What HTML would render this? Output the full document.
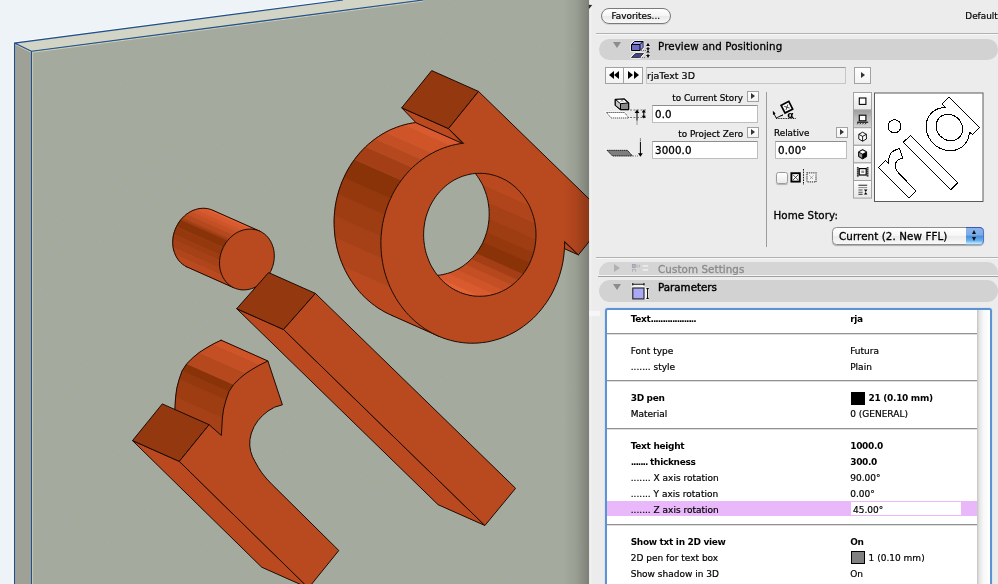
<!DOCTYPE html>
<html><head><meta charset="utf-8"><title>rjaText 3D</title>
<style>
html,body{margin:0;padding:0;background:#ececec;}
body{width:998px;height:584px;overflow:hidden;position:relative;font-family:"DejaVu Sans","Liberation Sans",sans-serif;color:#000;}
#scene{position:absolute;left:0;top:0;width:592px;height:584px;display:block;}
#icons{position:absolute;left:0;top:0;width:998px;height:584px;pointer-events:none;will-change:transform;}
#panel{position:absolute;left:0;top:0;width:998px;height:584px;overflow:hidden;will-change:transform;-webkit-text-stroke:0.2px currentColor;}
#panel > *{position:absolute;}
.pbg{left:589px;top:0;width:409px;height:584px;background:#ececec;}
.pedge{left:588.7px;top:0;width:3.4px;height:584px;background:linear-gradient(90deg,#e4e4e4,#f0f0f0 50%,#eeeeee);}
.t11{font-size:10.3px;line-height:14px;white-space:pre;position:absolute;letter-spacing:0.1px;-webkit-text-stroke:0.3px currentColor;}
.t10{font-size:9.5px;line-height:12px;white-space:pre;position:absolute;}
.t9{font-size:8.8px;line-height:12px;white-space:pre;position:absolute;}
.grey{color:#8a8a8a;}
.btn-fav{left:601px;top:8px;width:67.6px;height:13.6px;border:1.2px solid #7a7a7a;border-radius:8px;background:linear-gradient(#ffffff,#f4f4f4 50%,#e9e9e9 52%,#f8f8f8);font-size:8.9px;line-height:14px;text-align:center;box-shadow:0 1px 0 rgba(0,0,0,.10);}
.hsep{left:596px;width:402px;height:1px;background:#b2b2b2;box-shadow:0 1px 0 #f8f8f8;}
.hsep2{left:598px;width:400px;height:1px;background:#f4f4f4;box-shadow:0 1px 0 #a0a0a0;}
.vsep{width:1px;background:#9c9c9c;}
.pill{left:599px;width:399px;background:#d2d2d2;border-radius:11px;}
.pill.dim{background:#d5d5d5;}
.tri-down{width:0;height:0;border-left:4px solid transparent;border-right:4px solid transparent;border-top:6.5px solid #8c8c8c;}
.tri-right{width:0;height:0;border-top:4.1px solid transparent;border-bottom:4.1px solid transparent;border-left:6.8px solid #b0b0b0;}
.navbtn,.sbtn{box-sizing:border-box;border:1px solid #a2a2a2;background:linear-gradient(#ffffff,#f3f3f3);}
.arr{position:absolute;width:0;height:0;top:3.3px;border-top:4.2px solid transparent;border-bottom:4.2px solid transparent;}
.arr.l{border-right:5.6px solid #000;}
.arr.r{border-left:5.6px solid #000;}
.arr.s{border-top-width:3.1px;border-bottom-width:3.1px;border-left-width:4.4px;border-left-color:#333;}
.field{box-sizing:border-box;border:1px solid #bdbdbd;border-top-color:#8e8e8e;background:#fff;}
.field.ro{background:#ececec;border-color:#c6c6c6;border-top-color:#9c9c9c;}
.chk{width:10px;height:10px;border:1px solid #9a9a9a;border-radius:2.5px;background:linear-gradient(#fefefe,#ebebeb);box-shadow:0 1px 1px rgba(0,0,0,.25);}
.popup{box-sizing:border-box;border:1px solid #8c8c8c;border-radius:4.5px;background:linear-gradient(#ffffff,#f6f6f6 48%,#ebebeb 52%,#f8f8f8);box-shadow:0 1px 1px rgba(0,0,0,.28);}
.pcap{position:absolute;right:-1px;top:-1px;width:18px;height:18px;box-sizing:border-box;border-top:1.3px solid #4254b6;border-right:1px solid #4f74cc;border-bottom:1px solid #8aa6c8;border-radius:0 4.5px 4.5px 0;background:linear-gradient(#8ab6ec,#7aaae8 44%,#4c8edc 52%,#68aeec 78%,#c4f0ff 100%);}
.pcap i{position:absolute;left:5.6px;width:0;height:0;border-left:2.7px solid transparent;border-right:2.7px solid transparent;}
.pcap i.u{top:2.1px;border-bottom:4px solid #111;}
.pcap i.d{top:9.2px;border-top:4px solid #111;}
.notch{left:589px;top:311px;width:10.5px;height:5px;background:#f6f6f6;}
.list{left:605px;top:307.7px;width:387.3px;height:290px;box-sizing:border-box;border:2.3px solid #5b93d4;border-radius:3px;background:#fff;overflow:hidden;box-shadow:0 0 1.2px #8fb6e4;}
.list > *{position:absolute;}
.row{left:0;width:370px;height:14px;font-size:9px;line-height:14px;white-space:pre;}
.row.b{font-weight:bold;letter-spacing:-0.32px;-webkit-text-stroke:0;}
.row span{position:absolute;top:0;}
.row i.d{font-style:normal;}
.row.b i.d{letter-spacing:-1.05px;}
.row .k{left:23.7px;}
.row .v{left:243.2px;}
.row .v2{left:261.6px;}
.row .sw{left:244.3px;top:0.7px;width:13.4px;height:12.8px;box-sizing:border-box;border:1px solid #000;}
.lsep{left:0;width:370px;height:1px;background:#939393;box-shadow:0 1px 0 #dedede;}
.hl{left:0;width:370px;height:15.5px;background:#e8b8fa;}
.edit{left:243.6px;width:110.2px;height:13.2px;background:#fff;}
.sbar{left:370px;top:0;width:13px;height:290px;background:linear-gradient(90deg,#c4c4c4,#e6e6e6 20%,#f8f8f8 50%,#ffffff);}

</style></head>
<body>
<svg id="scene" width="592" height="584" viewBox="0 0 592 584">
<rect x="0" y="0" width="592" height="584" fill="#eef3f8"/>
<path d="M14.3 43.1 L343 0 L423 0 L31.3 51.3Z" fill="#d2d5c5"/>
<path d="M14.3 43.1 L31.3 51.3 L31.3 584 L14.3 584Z" fill="#9fa197"/>
<path d="M31.3 51.3 L423 0 L592 0 L592 584 L31.3 584Z" fill="#a5aa9e"/>
<path d="M13.4 42.2 L343 -1" fill="none" stroke="#ffffff" stroke-width="1" opacity="0.9"/>
<path d="M15.6 44.6 L31.5 52.4 L423 1.1 M32.6 52.4 V584" fill="none" stroke="#dcdcc4" stroke-width="0.9" opacity="0.8"/>
<path d="M13.2 43 V584" fill="none" stroke="#ffffff" stroke-width="0.8" opacity="0.9"/>
<path d="M14.5 584 L14.5 43.1 L343 0 M14.5 43.1 L31.5 51.3 L423 0 M31.5 51.3 L31.5 584" fill="none" stroke="#1f4f8c" stroke-width="1.1"/>
<path id="speckle" d="M46.6 59.5h1.3M97.1 46.0h1.3M77.6 62.1h1.3M58.0 78.2h1.3M38.4 94.4h1.3M128.1 48.5h1.3M108.6 64.6h1.3M89.0 80.8h1.3M69.4 96.9h1.3M49.9 113.0h1.3M178.7 34.9h1.3M159.1 51.1h1.3M139.6 67.2h1.3M120.0 83.3h1.3M100.4 99.5h1.3M80.9 115.6h1.3M61.3 131.7h1.3M41.8 147.9h1.3M209.7 37.5h1.3M190.1 53.6h1.3M170.6 69.7h1.3M151.0 85.9h1.3M131.4 102.0h1.3M111.9 118.1h1.3M92.3 134.3h1.3M72.8 150.4h1.3M53.2 166.6h1.3M33.6 182.7h1.3M260.2 23.9h1.3M240.7 40.0h1.3M221.1 56.2h1.3M201.6 72.3h1.3M182.0 88.4h1.3M162.4 104.6h1.3M142.9 120.7h1.3M123.3 136.8h1.3M103.8 153.0h1.3M84.2 169.1h1.3M64.6 185.2h1.3M45.1 201.4h1.3M291.2 26.4h1.3M271.7 42.6h1.3M252.1 58.7h1.3M232.6 74.8h1.3M213.0 91.0h1.3M193.4 107.1h1.3M173.9 123.2h1.3M154.3 139.4h1.3M134.8 155.5h1.3M115.2 171.7h1.3M95.6 187.8h1.3M76.1 203.9h1.3M56.5 220.1h1.3M37.0 236.2h1.3M341.8 12.9h1.3M322.2 29.0h1.3M302.7 45.1h1.3M283.1 61.3h1.3M263.6 77.4h1.3M244.0 93.5h1.3M224.4 109.7h1.3M204.9 125.8h1.3M185.3 141.9h1.3M165.8 158.1h1.3M146.2 174.2h1.3M126.6 190.3h1.3M107.1 206.5h1.3M87.5 222.6h1.3M68.0 238.7h1.3M48.4 254.9h1.3M372.8 15.4h1.3M353.2 31.5h1.3M333.7 47.7h1.3M314.1 63.8h1.3M294.6 79.9h1.3M275.0 96.1h1.3M255.4 112.2h1.3M235.9 128.3h1.3M216.3 144.5h1.3M196.8 160.6h1.3M177.2 176.8h1.3M157.6 192.9h1.3M138.1 209.0h1.3M118.5 225.2h1.3M99.0 241.3h1.3M79.4 257.4h1.3M59.8 273.6h1.3M40.3 289.7h1.3M423.4 1.8h1.3M403.8 17.9h1.3M384.2 34.1h1.3M364.7 50.2h1.3M345.1 66.4h1.3M325.6 82.5h1.3M306.0 98.6h1.3M286.4 114.8h1.3M266.9 130.9h1.3M247.3 147.0h1.3M227.8 163.2h1.3M208.2 179.3h1.3M188.6 195.4h1.3M169.1 211.6h1.3M149.5 227.7h1.3M130.0 243.8h1.3M110.4 260.0h1.3M90.8 276.1h1.3M71.3 292.2h1.3M51.7 308.4h1.3M454.4 4.4h1.3M434.8 20.5h1.3M415.2 36.6h1.3M395.7 52.8h1.3M376.1 68.9h1.3M356.6 85.0h1.3M337.0 101.2h1.3M317.4 117.3h1.3M297.9 133.4h1.3M278.3 149.6h1.3M258.8 165.7h1.3M239.2 181.9h1.3M219.6 198.0h1.3M200.1 214.1h1.3M180.5 230.3h1.3M161.0 246.4h1.3M141.4 262.5h1.3M121.8 278.7h1.3M102.3 294.8h1.3M82.7 310.9h1.3M63.2 327.1h1.3M43.6 343.2h1.3M485.4 6.9h1.3M465.8 23.1h1.3M446.2 39.2h1.3M426.7 55.3h1.3M407.1 71.5h1.3M387.6 87.6h1.3M368.0 103.7h1.3M348.4 119.9h1.3M328.9 136.0h1.3M309.3 152.1h1.3M289.8 168.3h1.3M270.2 184.4h1.3M250.6 200.5h1.3M231.1 216.7h1.3M211.5 232.8h1.3M192.0 248.9h1.3M172.4 265.1h1.3M152.8 281.2h1.3M133.3 297.3h1.3M113.7 313.5h1.3M94.2 329.6h1.3M74.6 345.8h1.3M55.0 361.9h1.3M35.5 378.0h1.3M516.4 9.5h1.3M496.8 25.6h1.3M477.2 41.7h1.3M457.7 57.9h1.3M438.1 74.0h1.3M418.6 90.1h1.3M399.0 106.3h1.3M379.4 122.4h1.3M359.9 138.5h1.3M340.3 154.7h1.3M320.8 170.8h1.3M301.2 187.0h1.3M281.6 203.1h1.3M262.1 219.2h1.3M242.5 235.4h1.3M223.0 251.5h1.3M203.4 267.6h1.3M183.8 283.8h1.3M164.3 299.9h1.3M144.7 316.0h1.3M125.2 332.2h1.3M105.6 348.3h1.3M86.0 364.4h1.3M66.5 380.6h1.3M46.9 396.7h1.3M547.4 12.0h1.3M527.8 28.1h1.3M508.2 44.3h1.3M488.7 60.4h1.3M469.1 76.6h1.3M449.6 92.7h1.3M430.0 108.8h1.3M410.4 125.0h1.3M390.9 141.1h1.3M371.3 157.2h1.3M351.8 173.4h1.3M332.2 189.5h1.3M312.6 205.6h1.3M293.1 221.8h1.3M273.5 237.9h1.3M254.0 254.0h1.3M234.4 270.2h1.3M214.8 286.3h1.3M195.3 302.4h1.3M175.7 318.6h1.3M156.2 334.7h1.3M136.6 350.9h1.3M117.0 367.0h1.3M97.5 383.1h1.3M77.9 399.3h1.3M58.4 415.4h1.3M38.8 431.5h1.3M578.4 14.6h1.3M558.8 30.7h1.3M539.2 46.8h1.3M519.7 63.0h1.3M500.1 79.1h1.3M480.6 95.2h1.3M461.0 111.4h1.3M441.4 127.5h1.3M421.9 143.6h1.3M402.3 159.8h1.3M382.8 175.9h1.3M363.2 192.1h1.3M343.6 208.2h1.3M324.1 224.3h1.3M304.5 240.5h1.3M285.0 256.6h1.3M265.4 272.7h1.3M245.8 288.9h1.3M226.3 305.0h1.3M206.7 321.1h1.3M187.2 337.3h1.3M167.6 353.4h1.3M148.0 369.5h1.3M128.5 385.7h1.3M108.9 401.8h1.3M89.4 417.9h1.3M69.8 434.1h1.3M50.2 450.2h1.3M570.2 49.4h1.3M550.7 65.5h1.3M531.1 81.7h1.3M511.6 97.8h1.3M492.0 113.9h1.3M472.4 130.1h1.3M452.9 146.2h1.3M433.3 162.3h1.3M413.8 178.5h1.3M394.2 194.6h1.3M374.6 210.7h1.3M355.1 226.9h1.3M335.5 243.0h1.3M316.0 259.1h1.3M296.4 275.3h1.3M276.8 291.4h1.3M257.3 307.5h1.3M237.7 323.7h1.3M218.2 339.8h1.3M198.6 356.0h1.3M179.0 372.1h1.3M159.5 388.2h1.3M139.9 404.4h1.3M120.4 420.5h1.3M100.8 436.6h1.3M81.2 452.8h1.3M61.7 468.9h1.3M42.1 485.0h1.3M581.7 68.1h1.3M562.1 84.2h1.3M542.6 100.3h1.3M523.0 116.5h1.3M503.4 132.6h1.3M483.9 148.7h1.3M464.3 164.9h1.3M444.8 181.0h1.3M425.2 197.2h1.3M405.6 213.3h1.3M386.1 229.4h1.3M366.5 245.6h1.3M347.0 261.7h1.3M327.4 277.8h1.3M307.8 294.0h1.3M288.3 310.1h1.3M268.7 326.2h1.3M249.2 342.4h1.3M229.6 358.5h1.3M210.0 374.6h1.3M190.5 390.8h1.3M170.9 406.9h1.3M151.4 423.0h1.3M131.8 439.2h1.3M112.2 455.3h1.3M92.7 471.4h1.3M73.1 487.6h1.3M53.6 503.7h1.3M34.0 519.9h1.3M573.6 102.9h1.3M554.0 119.0h1.3M534.4 135.2h1.3M514.9 151.3h1.3M495.3 167.4h1.3M475.8 183.6h1.3M456.2 199.7h1.3M436.6 215.8h1.3M417.1 232.0h1.3M397.5 248.1h1.3M378.0 264.2h1.3M358.4 280.4h1.3M338.8 296.5h1.3M319.3 312.6h1.3M299.7 328.8h1.3M280.2 344.9h1.3M260.6 361.1h1.3M241.0 377.2h1.3M221.5 393.3h1.3M201.9 409.5h1.3M182.4 425.6h1.3M162.8 441.7h1.3M143.2 457.9h1.3M123.7 474.0h1.3M104.1 490.1h1.3M84.6 506.3h1.3M65.0 522.4h1.3M45.4 538.5h1.3M585.0 121.6h1.3M565.4 137.7h1.3M545.9 153.8h1.3M526.3 170.0h1.3M506.8 186.1h1.3M487.2 202.3h1.3M467.6 218.4h1.3M448.1 234.5h1.3M428.5 250.7h1.3M409.0 266.8h1.3M389.4 282.9h1.3M369.8 299.1h1.3M350.3 315.2h1.3M330.7 331.3h1.3M311.2 347.5h1.3M291.6 363.6h1.3M272.0 379.7h1.3M252.5 395.9h1.3M232.9 412.0h1.3M213.4 428.1h1.3M193.8 444.3h1.3M174.2 460.4h1.3M154.7 476.5h1.3M135.1 492.7h1.3M115.6 508.8h1.3M96.0 525.0h1.3M76.4 541.1h1.3M56.9 557.2h1.3M37.3 573.4h1.3M576.9 156.4h1.3M557.3 172.5h1.3M537.8 188.7h1.3M518.2 204.8h1.3M498.6 220.9h1.3M479.1 237.1h1.3M459.5 253.2h1.3M440.0 269.3h1.3M420.4 285.5h1.3M400.8 301.6h1.3M381.3 317.7h1.3M361.7 333.9h1.3M342.2 350.0h1.3M322.6 366.2h1.3M303.0 382.3h1.3M283.5 398.4h1.3M263.9 414.6h1.3M244.4 430.7h1.3M224.8 446.8h1.3M205.2 463.0h1.3M185.7 479.1h1.3M166.1 495.2h1.3M146.6 511.4h1.3M127.0 527.5h1.3M107.4 543.6h1.3M87.9 559.8h1.3M68.3 575.9h1.3M568.8 191.2h1.3M549.2 207.4h1.3M529.6 223.5h1.3M510.1 239.6h1.3M490.5 255.8h1.3M471.0 271.9h1.3M451.4 288.0h1.3M431.8 304.2h1.3M412.3 320.3h1.3M392.7 336.4h1.3M373.2 352.6h1.3M353.6 368.7h1.3M334.0 384.8h1.3M314.5 401.0h1.3M294.9 417.1h1.3M275.4 433.2h1.3M255.8 449.4h1.3M236.2 465.5h1.3M216.7 481.6h1.3M197.1 497.8h1.3M177.6 513.9h1.3M158.0 530.1h1.3M138.4 546.2h1.3M118.9 562.3h1.3M99.3 578.5h1.3M580.2 209.9h1.3M560.6 226.0h1.3M541.1 242.2h1.3M521.5 258.3h1.3M502.0 274.4h1.3M482.4 290.6h1.3M462.8 306.7h1.3M443.3 322.8h1.3M423.7 339.0h1.3M404.2 355.1h1.3M384.6 371.3h1.3M365.0 387.4h1.3M345.5 403.5h1.3M325.9 419.7h1.3M306.4 435.8h1.3M286.8 451.9h1.3M267.2 468.1h1.3M247.7 484.2h1.3M228.1 500.3h1.3M208.6 516.5h1.3M189.0 532.6h1.3M169.4 548.7h1.3M149.9 564.9h1.3M130.3 581.0h1.3M572.1 244.7h1.3M552.5 260.9h1.3M533.0 277.0h1.3M513.4 293.1h1.3M493.8 309.3h1.3M474.3 325.4h1.3M454.7 341.5h1.3M435.2 357.7h1.3M415.6 373.8h1.3M396.0 389.9h1.3M376.5 406.1h1.3M356.9 422.2h1.3M337.4 438.3h1.3M317.8 454.5h1.3M298.2 470.6h1.3M278.7 486.7h1.3M259.1 502.9h1.3M239.6 519.0h1.3M220.0 535.2h1.3M200.4 551.3h1.3M180.9 567.4h1.3M161.3 583.6h1.3M583.5 263.4h1.3M564.0 279.5h1.3M544.4 295.7h1.3M524.8 311.8h1.3M505.3 327.9h1.3M485.7 344.1h1.3M466.2 360.2h1.3M446.6 376.4h1.3M427.0 392.5h1.3M407.5 408.6h1.3M387.9 424.8h1.3M368.4 440.9h1.3M348.8 457.0h1.3M329.2 473.2h1.3M309.7 489.3h1.3M290.1 505.4h1.3M270.6 521.6h1.3M251.0 537.7h1.3M231.4 553.8h1.3M211.9 570.0h1.3M575.4 298.2h1.3M555.8 314.4h1.3M536.3 330.5h1.3M516.7 346.6h1.3M497.2 362.8h1.3M477.6 378.9h1.3M458.0 395.0h1.3M438.5 411.2h1.3M418.9 427.3h1.3M399.4 443.4h1.3M379.8 459.6h1.3M360.2 475.7h1.3M340.7 491.8h1.3M321.1 508.0h1.3M301.6 524.1h1.3M282.0 540.3h1.3M262.4 556.4h1.3M242.9 572.5h1.3M586.8 316.9h1.3M567.3 333.0h1.3M547.7 349.2h1.3M528.2 365.3h1.3M508.6 381.5h1.3M489.0 397.6h1.3M469.5 413.7h1.3M449.9 429.9h1.3M430.4 446.0h1.3M410.8 462.1h1.3M391.2 478.3h1.3M371.7 494.4h1.3M352.1 510.5h1.3M332.6 526.7h1.3M313.0 542.8h1.3M293.4 558.9h1.3M273.9 575.1h1.3M578.7 351.7h1.3M559.2 367.9h1.3M539.6 384.0h1.3M520.0 400.1h1.3M500.5 416.3h1.3M480.9 432.4h1.3M461.4 448.5h1.3M441.8 464.7h1.3M422.2 480.8h1.3M402.7 496.9h1.3M383.1 513.1h1.3M363.6 529.2h1.3M344.0 545.4h1.3M324.4 561.5h1.3M304.9 577.6h1.3M570.6 386.6h1.3M551.0 402.7h1.3M531.5 418.8h1.3M511.9 435.0h1.3M492.4 451.1h1.3M472.8 467.2h1.3M453.2 483.4h1.3M433.7 499.5h1.3M414.1 515.6h1.3M394.6 531.8h1.3M375.0 547.9h1.3M355.4 564.0h1.3M335.9 580.2h1.3M582.0 405.2h1.3M562.5 421.4h1.3M542.9 437.5h1.3M523.4 453.6h1.3M503.8 469.8h1.3M484.2 485.9h1.3M464.7 502.0h1.3M445.1 518.2h1.3M425.6 534.3h1.3M406.0 550.5h1.3M386.4 566.6h1.3M366.9 582.7h1.3M573.9 440.1h1.3M554.4 456.2h1.3M534.8 472.3h1.3M515.2 488.5h1.3M495.7 504.6h1.3M476.1 520.7h1.3M456.6 536.9h1.3M437.0 553.0h1.3M417.4 569.1h1.3M585.4 458.7h1.3M565.8 474.9h1.3M546.2 491.0h1.3M526.7 507.1h1.3M507.1 523.3h1.3M487.6 539.4h1.3M468.0 555.6h1.3M448.4 571.7h1.3M577.2 493.6h1.3M557.7 509.7h1.3M538.1 525.8h1.3M518.6 542.0h1.3M499.0 558.1h1.3M479.4 574.2h1.3M569.1 528.4h1.3M549.6 544.5h1.3M530.0 560.7h1.3M510.4 576.8h1.3M580.6 547.1h1.3M561.0 563.2h1.3M541.4 579.3h1.3M572.4 581.9h1.3" stroke="#a6a8dc" stroke-width="1.2" fill="none" opacity="0.85"/>
<path d="M260.6 231.5 L258.5 230.6 L256.3 229.9 L254.0 229.4 L251.7 229.1 L249.3 229.1 L202.5 208.3 L204.9 208.3 L207.2 208.6 L209.5 209.1 L211.7 209.8 L213.8 210.7Z" fill="#e36334" stroke="#e36334" stroke-width="0.6"/>
<path d="M249.3 229.1 L246.9 229.3 L244.5 229.7 L242.1 230.4 L195.3 209.6 L197.7 208.9 L200.1 208.5 L202.5 208.3Z" fill="#d85a2e" stroke="#d85a2e" stroke-width="0.6"/>
<path d="M242.1 230.4 L239.8 231.2 L237.5 232.3 L190.7 211.5 L193.0 210.4 L195.3 209.6Z" fill="#cf5529" stroke="#cf5529" stroke-width="0.6"/>
<path d="M237.5 232.3 L235.3 233.6 L233.2 235.1 L186.4 214.3 L188.5 212.8 L190.7 211.5Z" fill="#c44f24" stroke="#c44f24" stroke-width="0.6"/>
<path d="M233.2 235.1 L231.2 236.8 L229.3 238.7 L182.5 217.9 L184.4 216.0 L186.4 214.3Z" fill="#b6481e" stroke="#b6481e" stroke-width="0.6"/>
<path d="M229.3 238.7 L227.5 240.7 L180.7 219.9 L182.5 217.9Z" fill="#a43e16" stroke="#a43e16" stroke-width="0.6"/>
<path d="M227.5 240.7 L225.9 242.8 L224.5 245.1 L223.2 247.5 L176.4 226.7 L177.7 224.3 L179.1 222.0 L180.7 219.9Z" fill="#8b3308" stroke="#8b3308" stroke-width="0.6"/>
<path d="M223.2 247.5 L222.1 250.0 L221.2 252.5 L220.4 255.1 L173.6 234.3 L174.4 231.7 L175.3 229.2 L176.4 226.7Z" fill="#96380e" stroke="#96380e" stroke-width="0.6"/>
<path d="M220.4 255.1 L219.9 257.8 L219.6 260.4 L172.8 239.6 L173.1 237.0 L173.6 234.3Z" fill="#9e3c12" stroke="#9e3c12" stroke-width="0.6"/>
<path d="M219.6 260.4 L219.5 263.1 L219.6 265.7 L219.9 268.3 L173.1 247.5 L172.8 244.9 L172.7 242.3 L172.8 239.6Z" fill="#a64016" stroke="#a64016" stroke-width="0.6"/>
<path d="M219.9 268.3 L220.4 270.8 L221.2 273.2 L222.1 275.5 L175.3 254.7 L174.4 252.4 L173.6 250.0 L173.1 247.5Z" fill="#b0441a" stroke="#b0441a" stroke-width="0.6"/>
<path d="M222.1 275.5 L223.2 277.7 L224.5 279.8 L225.9 281.7 L227.5 283.4 L229.3 285.0 L231.2 286.3 L233.2 287.5 L186.4 266.7 L184.4 265.5 L182.5 264.2 L180.7 262.6 L179.1 260.9 L177.7 259.0 L176.4 256.9 L175.3 254.7Z" fill="#ba491f" stroke="#ba491f" stroke-width="0.6"/>
<path d="M213.8 210.7 L211.7 209.8 L209.5 209.1 L207.2 208.6 L204.9 208.3 L202.5 208.3 L200.1 208.5 L197.7 208.9 L195.3 209.6 L193.0 210.4 L190.7 211.5 L188.5 212.8 L186.4 214.3 L184.4 216.0 L182.5 217.9 L180.7 219.9 L179.1 222.0 L177.7 224.3 L176.4 226.7 L175.3 229.2 L174.4 231.7 L173.6 234.3 L173.1 237.0 L172.8 239.6 L172.7 242.3 L172.8 244.9 L173.1 247.5 L173.6 250.0 L174.4 252.4 L175.3 254.7 L176.4 256.9 L177.7 259.0 L179.1 260.9 L180.7 262.6 L182.5 264.2 L184.4 265.5 L186.4 266.7" fill="none" stroke="#1c0a02" stroke-width="1" stroke-linejoin="round" stroke-linecap="round"/>
<path d="M213.8 210.7 L260.6 231.5" fill="none" stroke="#1c0a02" stroke-width="1" stroke-linejoin="round" stroke-linecap="round"/>
<path d="M186.4 266.7 L233.2 287.5" fill="none" stroke="#1c0a02" stroke-width="1" stroke-linejoin="round" stroke-linecap="round"/>
<path d="M274.3 255.9 L274.2 253.3 L273.9 250.7 L273.4 248.2 L272.6 245.8 L271.7 243.5 L270.6 241.3 L269.3 239.2 L267.9 237.3 L266.3 235.6 L264.5 234.0 L262.6 232.7 L260.6 231.5 L258.5 230.6 L256.3 229.9 L254.0 229.4 L251.7 229.1 L249.3 229.1 L246.9 229.3 L244.5 229.7 L242.1 230.4 L239.8 231.2 L237.5 232.3 L235.3 233.6 L233.2 235.1 L231.2 236.8 L229.3 238.7 L227.5 240.7 L225.9 242.8 L224.5 245.1 L223.2 247.5 L222.1 250.0 L221.2 252.5 L220.4 255.1 L219.9 257.8 L219.6 260.4 L219.5 263.1 L219.6 265.7 L219.9 268.3 L220.4 270.8 L221.2 273.2 L222.1 275.5 L223.2 277.7 L224.5 279.8 L225.9 281.7 L227.5 283.4 L229.3 285.0 L231.2 286.3 L233.2 287.5 L235.3 288.4 L237.5 289.1 L239.8 289.6 L242.1 289.9 L244.5 289.9 L246.9 289.7 L249.3 289.3 L251.7 288.6 L254.0 287.8 L256.3 286.7 L258.5 285.4 L260.6 283.9 L262.6 282.2 L264.5 280.3 L266.3 278.3 L267.9 276.2 L269.3 273.9 L270.6 271.5 L271.7 269.0 L272.6 266.5 L273.4 263.9 L273.9 261.2 L274.2 258.6 L274.3 255.9Z" fill="#b9491f" stroke="#1c0a02" stroke-width="1" stroke-linejoin="round" />
<path d="M236.7 308.7 L283.5 329.5 L484.9 525.5 L438.1 504.7Z" fill="#ba491f" stroke="#1c0a02" stroke-width="1" stroke-linejoin="round" />
<path d="M236.7 308.7 L268.6 272.6 L315.4 293.4 L283.5 329.5Z" fill="#93380f" stroke="#1c0a02" stroke-width="1" stroke-linejoin="round" />
<path d="M475.2 142.7 L479.2 142.9 L483.2 143.3 L487.1 143.8 L491.1 144.6 L495.0 145.5 L498.9 146.7 L502.7 148.0 L506.4 149.5 L459.6 128.7 L455.9 127.2 L452.1 125.9 L448.2 124.7 L444.3 123.8 L440.3 123.0 L436.4 122.5 L432.4 122.1 L428.4 121.9Z" fill="#e36334" stroke="#e36334" stroke-width="0.6"/>
<path d="M439.1 336.4 L435.4 334.7 L431.8 332.9 L428.2 330.8 L424.7 328.7 L421.4 326.3 L418.1 323.8 L414.9 321.1 L411.9 318.3 L408.9 315.4 L406.1 312.3 L403.4 309.0 L400.9 305.7 L398.4 302.2 L396.1 298.6 L394.0 294.9 L392.0 291.1 L390.2 287.3 L343.4 266.5 L345.2 270.3 L347.2 274.1 L349.3 277.8 L351.6 281.4 L354.1 284.9 L356.6 288.2 L359.3 291.5 L362.1 294.6 L365.1 297.5 L368.1 300.3 L371.3 303.0 L374.6 305.5 L377.9 307.9 L381.4 310.0 L385.0 312.1 L388.6 313.9 L392.3 315.6Z" fill="#ba491f" stroke="#ba491f" stroke-width="0.6"/>
<path d="M390.2 287.3 L388.5 283.3 L387.0 279.3 L385.6 275.1 L384.4 271.0 L383.4 266.7 L382.6 262.5 L381.9 258.2 L335.1 237.4 L335.8 241.7 L336.6 245.9 L337.6 250.2 L338.8 254.3 L340.2 258.5 L341.7 262.5 L343.4 266.5Z" fill="#b0441a" stroke="#b0441a" stroke-width="0.6"/>
<path d="M381.9 258.2 L381.4 253.8 L381.1 249.5 L380.9 245.1 L380.9 240.7 L381.1 236.4 L334.3 215.6 L334.1 219.9 L334.1 224.3 L334.3 228.7 L334.6 233.0 L335.1 237.4Z" fill="#a64016" stroke="#a64016" stroke-width="0.6"/>
<path d="M381.1 236.4 L381.5 232.0 L382.0 227.7 L382.7 223.3 L383.6 219.1 L384.7 214.9 L337.9 194.1 L336.8 198.3 L335.9 202.5 L335.2 206.9 L334.7 211.2 L334.3 215.6Z" fill="#9e3c12" stroke="#9e3c12" stroke-width="0.6"/>
<path d="M384.7 214.9 L385.9 210.7 L387.3 206.6 L388.8 202.5 L390.6 198.6 L343.8 177.8 L342.0 181.7 L340.5 185.8 L339.1 189.9 L337.9 194.1Z" fill="#96380e" stroke="#96380e" stroke-width="0.6"/>
<path d="M390.6 198.6 L392.4 194.7 L394.4 190.9 L396.6 187.2 L398.9 183.6 L401.4 180.2 L354.6 159.4 L352.1 162.8 L349.8 166.4 L347.6 170.1 L345.6 173.9 L343.8 177.8Z" fill="#8b3308" stroke="#8b3308" stroke-width="0.6"/>
<path d="M401.4 180.2 L404.0 176.8 L406.7 173.6 L409.5 170.5 L412.5 167.5 L365.7 146.7 L362.7 149.7 L359.9 152.8 L357.2 156.0 L354.6 159.4Z" fill="#a43e16" stroke="#a43e16" stroke-width="0.6"/>
<path d="M412.5 167.5 L415.6 164.7 L418.8 162.1 L422.1 159.5 L375.3 138.7 L372.0 141.3 L368.8 143.9 L365.7 146.7Z" fill="#b6481e" stroke="#b6481e" stroke-width="0.6"/>
<path d="M422.1 159.5 L425.5 157.2 L428.9 155.0 L432.5 153.0 L385.7 132.2 L382.1 134.2 L378.7 136.4 L375.3 138.7Z" fill="#c44f24" stroke="#c44f24" stroke-width="0.6"/>
<path d="M432.5 153.0 L436.1 151.1 L439.8 149.5 L443.6 148.0 L447.4 146.7 L451.3 145.5 L404.5 124.7 L400.6 125.9 L396.8 127.2 L393.0 128.7 L389.3 130.3 L385.7 132.2Z" fill="#cf5529" stroke="#cf5529" stroke-width="0.6"/>
<path d="M451.3 145.5 L455.2 144.6 L459.2 143.8 L463.2 143.3 L467.2 142.9 L471.2 142.7 L424.4 121.9 L420.4 122.1 L416.4 122.5 L412.4 123.0 L408.4 123.8 L404.5 124.7Z" fill="#d85a2e" stroke="#d85a2e" stroke-width="0.6"/>
<path d="M471.2 142.7 L475.2 142.7 L428.4 121.9 L424.4 121.9Z" fill="#e36334" stroke="#e36334" stroke-width="0.6"/>
<path d="M392.3 315.6 L388.6 313.9 L385.0 312.1 L381.4 310.0 L377.9 307.9 L374.6 305.5 L371.3 303.0 L368.1 300.3 L365.1 297.5 L362.1 294.6 L359.3 291.5 L356.6 288.2 L354.1 284.9 L351.6 281.4 L349.3 277.8 L347.2 274.1 L345.2 270.3 L343.4 266.5 L341.7 262.5 L340.2 258.5 L338.8 254.3 L337.6 250.2 L336.6 245.9 L335.8 241.7 L335.1 237.4 L334.6 233.0 L334.3 228.7 L334.1 224.3 L334.1 219.9 L334.3 215.6 L334.7 211.2 L335.2 206.9 L335.9 202.5 L336.8 198.3 L337.9 194.1 L339.1 189.9 L340.5 185.8 L342.0 181.7 L343.8 177.8 L345.6 173.9 L347.6 170.1 L349.8 166.4 L352.1 162.8 L354.6 159.4 L357.2 156.0 L359.9 152.8 L362.7 149.7 L365.7 146.7 L368.8 143.9 L372.0 141.3 L375.3 138.7 L378.7 136.4 L382.1 134.2 L385.7 132.2 L389.3 130.3 L393.0 128.7 L396.8 127.2 L400.6 125.9 L404.5 124.7 L408.4 123.8 L412.4 123.0 L416.4 122.5 L420.4 122.1 L424.4 121.9 L428.4 121.9 L432.4 122.1 L436.4 122.5 L440.3 123.0 L444.3 123.8 L448.2 124.7 L452.1 125.9 L455.9 127.2 L459.6 128.7" fill="none" stroke="#1c0a02" stroke-width="1" stroke-linejoin="round" stroke-linecap="round"/>
<path d="M459.6 128.7 L506.4 149.5" fill="none" stroke="#1c0a02" stroke-width="1" stroke-linejoin="round" stroke-linecap="round"/>
<path d="M392.3 315.6 L439.1 336.4" fill="none" stroke="#1c0a02" stroke-width="1" stroke-linejoin="round" stroke-linecap="round"/>
<path d="M401.7 107.8 L448.5 128.6 L463.0 143.7 L416.2 122.9Z" fill="#ba491f" stroke="#1c0a02" stroke-width="1" stroke-linejoin="round" />
<path d="M517.8 221.3 L564.6 242.1 L578.4 254.9 L531.6 234.1Z" fill="#ba491f" stroke="#1c0a02" stroke-width="1" stroke-linejoin="round" />
<path d="M401.7 107.8 L431.7 70.6 L478.5 91.4 L448.5 128.6Z" fill="#93380f" stroke="#1c0a02" stroke-width="1" stroke-linejoin="round" />
<defs><clipPath id="holeF"><path d="M479.8 173.3 L482.3 173.4 L484.7 173.5 L487.1 173.8 L489.6 174.2 L492.0 174.8 L494.3 175.4 L496.7 176.1 L499.0 177.0 L501.3 178.0 L503.6 179.1 L505.8 180.2 L507.9 181.5 L510.0 182.9 L512.0 184.4 L514.0 186.0 L515.9 187.7 L517.8 189.5 L519.5 191.3 L521.2 193.3 L522.9 195.3 L524.4 197.4 L525.8 199.5 L527.2 201.8 L528.5 204.1 L529.7 206.4 L530.7 208.8 L531.7 211.3 L532.6 213.8 L533.4 216.3 L534.1 218.9 L534.7 221.5 L535.1 224.1 L535.5 226.8 L535.8 229.4 L535.9 232.1 L536.0 234.8 L535.9 237.5 L535.8 240.2 L535.5 242.8 L535.1 245.5 L534.7 248.1 L534.1 250.7 L533.4 253.3 L532.6 255.8 L531.7 258.3 L530.7 260.8 L529.7 263.2 L528.5 265.6 L527.2 267.8 L525.8 270.1 L524.4 272.2 L522.9 274.3 L521.2 276.3 L519.5 278.3 L517.8 280.1 L515.9 281.9 L514.0 283.6 L512.0 285.2 L510.0 286.7 L507.9 288.1 L505.8 289.4 L503.6 290.5 L501.3 291.6 L499.0 292.6 L496.7 293.5 L494.3 294.2 L492.0 294.8 L489.6 295.4 L487.1 295.8 L484.7 296.1 L482.3 296.2 L479.8 296.3 L477.3 296.2 L474.9 296.1 L472.5 295.8 L470.0 295.4 L467.6 294.8 L465.3 294.2 L462.9 293.5 L460.6 292.6 L458.3 291.6 L456.0 290.5 L453.8 289.4 L451.7 288.1 L449.6 286.7 L447.6 285.2 L445.6 283.6 L443.7 281.9 L441.8 280.1 L440.1 278.3 L438.4 276.3 L436.7 274.3 L435.2 272.2 L433.8 270.1 L432.4 267.8 L431.1 265.6 L429.9 263.2 L428.9 260.8 L427.9 258.3 L427.0 255.8 L426.2 253.3 L425.5 250.7 L424.9 248.1 L424.5 245.5 L424.1 242.8 L423.8 240.2 L423.7 237.5 L423.6 234.8 L423.7 232.1 L423.8 229.4 L424.1 226.8 L424.5 224.1 L424.9 221.5 L425.5 218.9 L426.2 216.3 L427.0 213.8 L427.9 211.3 L428.9 208.8 L429.9 206.4 L431.1 204.1 L432.4 201.8 L433.8 199.5 L435.2 197.4 L436.7 195.3 L438.4 193.3 L440.1 191.3 L441.8 189.5 L443.7 187.7 L445.6 186.0 L447.6 184.4 L449.6 182.9 L451.7 181.5 L453.8 180.2 L456.0 179.1 L458.3 178.0 L460.6 177.0 L462.9 176.1 L465.3 175.4 L467.6 174.8 L470.0 174.2 L472.5 173.8 L474.9 173.5 L477.3 173.4 L479.8 173.3Z"/></clipPath><clipPath id="outerF"><path d="M475.2 142.7 L479.2 142.9 L483.2 143.3 L487.1 143.8 L491.1 144.6 L495.0 145.5 L498.9 146.7 L502.7 148.0 L506.4 149.5 L510.1 151.2 L513.7 153.0 L517.3 155.0 L520.8 157.2 L524.1 159.6 L527.4 162.1 L530.6 164.8 L533.6 167.6 L536.6 170.5 L539.4 173.6 L542.1 176.8 L544.6 180.2 L547.1 183.7 L549.4 187.3 L551.5 190.9 L553.5 194.7 L555.3 198.6 L557.0 202.6 L558.5 206.6 L559.9 210.7 L561.1 214.9 L562.1 219.1 L562.9 223.4 L563.6 227.7 L564.1 232.1 L564.4 236.4 L564.6 240.8 L564.6 245.2 L564.4 249.5 L564.0 253.9 L563.5 258.2 L562.8 262.5 L561.9 266.8 L560.8 271.0 L559.6 275.2 L558.2 279.3 L556.7 283.4 L554.9 287.3 L553.1 291.2 L551.1 295.0 L548.9 298.7 L546.6 302.3 L544.1 305.7 L541.5 309.1 L538.8 312.3 L536.0 315.4 L533.0 318.4 L529.9 321.2 L526.7 323.8 L523.4 326.3 L520.0 328.7 L516.6 330.9 L513.0 332.9 L509.4 334.7 L505.7 336.4 L501.9 337.9 L498.1 339.2 L494.2 340.3 L490.3 341.3 L486.3 342.1 L482.3 342.6 L478.3 343.0 L474.3 343.2 L470.3 343.2 L466.3 343.0 L462.3 342.6 L458.4 342.0 L454.4 341.3 L450.5 340.3 L446.6 339.2 L442.8 337.9 L439.1 336.4 L435.4 334.7 L431.8 332.9 L428.2 330.8 L424.7 328.7 L421.4 326.3 L418.1 323.8 L414.9 321.1 L411.9 318.3 L408.9 315.4 L406.1 312.3 L403.4 309.0 L400.9 305.7 L398.4 302.2 L396.1 298.6 L394.0 294.9 L392.0 291.1 L390.2 287.3 L388.5 283.3 L387.0 279.3 L385.6 275.1 L384.4 271.0 L383.4 266.7 L382.6 262.5 L381.9 258.2 L381.4 253.8 L381.1 249.5 L380.9 245.1 L380.9 240.7 L381.1 236.4 L381.5 232.0 L382.0 227.7 L382.7 223.3 L383.6 219.1 L384.7 214.9 L385.9 210.7 L387.3 206.6 L388.8 202.5 L390.6 198.6 L392.4 194.7 L394.4 190.9 L396.6 187.2 L398.9 183.6 L401.4 180.2 L404.0 176.8 L406.7 173.6 L409.5 170.5 L412.5 167.5 L415.6 164.7 L418.8 162.1 L422.1 159.5 L425.5 157.2 L428.9 155.0 L432.5 153.0 L436.1 151.1 L439.8 149.5 L443.6 148.0 L447.4 146.7 L451.3 145.5 L455.2 144.6 L459.2 143.8 L463.2 143.3 L467.2 142.9 L471.2 142.7 L475.2 142.7Z"/></clipPath><clipPath id="notstem" clip-rule="evenodd"><path d="M0 0H600V600H0Z M448.5 128.6 L478.5 91.4 L608.4 217.7 L578.4 254.9Z" clip-rule="evenodd"/></clipPath></defs>
<g clip-path="url(#holeF)">
<path d="M479.8 173.3 L482.3 173.4 L484.7 173.5 L487.1 173.8 L489.6 174.2 L492.0 174.8 L494.3 175.4 L496.7 176.1 L499.0 177.0 L501.3 178.0 L503.6 179.1 L505.8 180.2 L507.9 181.5 L510.0 182.9 L512.0 184.4 L514.0 186.0 L515.9 187.7 L517.8 189.5 L519.5 191.3 L521.2 193.3 L522.9 195.3 L524.4 197.4 L525.8 199.5 L527.2 201.8 L528.5 204.1 L529.7 206.4 L530.7 208.8 L531.7 211.3 L532.6 213.8 L533.4 216.3 L534.1 218.9 L534.7 221.5 L535.1 224.1 L535.5 226.8 L535.8 229.4 L535.9 232.1 L536.0 234.8 L535.9 237.5 L535.8 240.2 L535.5 242.8 L535.1 245.5 L534.7 248.1 L534.1 250.7 L533.4 253.3 L532.6 255.8 L531.7 258.3 L530.7 260.8 L529.7 263.2 L528.5 265.6 L527.2 267.8 L525.8 270.1 L524.4 272.2 L522.9 274.3 L521.2 276.3 L519.5 278.3 L517.8 280.1 L515.9 281.9 L514.0 283.6 L512.0 285.2 L510.0 286.7 L507.9 288.1 L505.8 289.4 L503.6 290.5 L501.3 291.6 L499.0 292.6 L496.7 293.5 L494.3 294.2 L492.0 294.8 L489.6 295.4 L487.1 295.8 L484.7 296.1 L482.3 296.2 L479.8 296.3 L477.3 296.2 L474.9 296.1 L472.5 295.8 L470.0 295.4 L467.6 294.8 L465.3 294.2 L462.9 293.5 L460.6 292.6 L458.3 291.6 L456.0 290.5 L453.8 289.4 L451.7 288.1 L449.6 286.7 L447.6 285.2 L445.6 283.6 L443.7 281.9 L441.8 280.1 L440.1 278.3 L438.4 276.3 L436.7 274.3 L435.2 272.2 L433.8 270.1 L432.4 267.8 L431.1 265.6 L429.9 263.2 L428.9 260.8 L427.9 258.3 L427.0 255.8 L426.2 253.3 L425.5 250.7 L424.9 248.1 L424.5 245.5 L424.1 242.8 L423.8 240.2 L423.7 237.5 L423.6 234.8 L423.7 232.1 L423.8 229.4 L424.1 226.8 L424.5 224.1 L424.9 221.5 L425.5 218.9 L426.2 216.3 L427.0 213.8 L427.9 211.3 L428.9 208.8 L429.9 206.4 L431.1 204.1 L432.4 201.8 L433.8 199.5 L435.2 197.4 L436.7 195.3 L438.4 193.3 L440.1 191.3 L441.8 189.5 L443.7 187.7 L445.6 186.0 L447.6 184.4 L449.6 182.9 L451.7 181.5 L453.8 180.2 L456.0 179.1 L458.3 178.0 L460.6 177.0 L462.9 176.1 L465.3 175.4 L467.6 174.8 L470.0 174.2 L472.5 173.8 L474.9 173.5 L477.3 173.4 L479.8 173.3Z" fill="#b9491f"/>
<path d="M501.3 178.0 L503.6 179.1 L505.8 180.2 L507.9 181.5 L510.0 182.9 L512.0 184.4 L514.0 186.0 L515.9 187.7 L517.8 189.5 L519.5 191.3 L521.2 193.3 L522.9 195.3 L524.4 197.4 L525.8 199.5 L527.2 201.8 L528.5 204.1 L529.7 206.4 L482.9 185.6 L481.7 183.2 L480.4 181.0 L479.0 178.7 L477.6 176.6 L476.1 174.5 L474.4 172.5 L472.7 170.5 L471.0 168.7 L469.1 166.9 L467.2 165.2 L465.2 163.6 L463.2 162.1 L461.1 160.7 L459.0 159.4 L456.8 158.3 L454.5 157.2Z" fill="#ba491f" stroke="#ba491f" stroke-width="0.6"/>
<path d="M529.7 206.4 L530.7 208.8 L531.7 211.3 L532.6 213.8 L533.4 216.3 L534.1 218.9 L534.7 221.5 L535.1 224.1 L488.3 203.3 L487.9 200.7 L487.3 198.1 L486.6 195.5 L485.8 193.0 L484.9 190.5 L483.9 188.0 L482.9 185.6Z" fill="#b0441a" stroke="#b0441a" stroke-width="0.6"/>
<path d="M535.1 224.1 L535.5 226.8 L535.8 229.4 L535.9 232.1 L536.0 234.8 L535.9 237.5 L535.8 240.2 L489.0 219.4 L489.1 216.7 L489.2 214.0 L489.1 211.3 L489.0 208.6 L488.7 206.0 L488.3 203.3Z" fill="#a64016" stroke="#a64016" stroke-width="0.6"/>
<path d="M535.8 240.2 L535.5 242.8 L535.1 245.5 L534.7 248.1 L534.1 250.7 L533.4 253.3 L486.6 232.5 L487.3 229.9 L487.9 227.3 L488.3 224.7 L488.7 222.0 L489.0 219.4Z" fill="#9e3c12" stroke="#9e3c12" stroke-width="0.6"/>
<path d="M533.4 253.3 L532.6 255.8 L531.7 258.3 L530.7 260.8 L529.7 263.2 L482.9 242.4 L483.9 240.0 L484.9 237.5 L485.8 235.0 L486.6 232.5Z" fill="#96380e" stroke="#96380e" stroke-width="0.6"/>
<path d="M529.7 263.2 L528.5 265.6 L527.2 267.8 L525.8 270.1 L524.4 272.2 L522.9 274.3 L476.1 253.5 L477.6 251.4 L479.0 249.3 L480.4 247.0 L481.7 244.8 L482.9 242.4Z" fill="#8b3308" stroke="#8b3308" stroke-width="0.6"/>
<path d="M522.9 274.3 L521.2 276.3 L519.5 278.3 L517.8 280.1 L471.0 259.3 L472.7 257.5 L474.4 255.5 L476.1 253.5Z" fill="#a43e16" stroke="#a43e16" stroke-width="0.6"/>
<path d="M517.8 280.1 L515.9 281.9 L514.0 283.6 L512.0 285.2 L465.2 264.4 L467.2 262.8 L469.1 261.1 L471.0 259.3Z" fill="#b6481e" stroke="#b6481e" stroke-width="0.6"/>
<path d="M512.0 285.2 L510.0 286.7 L507.9 288.1 L505.8 289.4 L503.6 290.5 L456.8 269.7 L459.0 268.6 L461.1 267.3 L463.2 265.9 L465.2 264.4Z" fill="#c44f24" stroke="#c44f24" stroke-width="0.6"/>
<path d="M503.6 290.5 L501.3 291.6 L499.0 292.6 L496.7 293.5 L494.3 294.2 L447.5 273.4 L449.9 272.7 L452.2 271.8 L454.5 270.8 L456.8 269.7Z" fill="#cf5529" stroke="#cf5529" stroke-width="0.6"/>
<path d="M494.3 294.2 L492.0 294.8 L489.6 295.4 L487.1 295.8 L484.7 296.1 L482.3 296.2 L479.8 296.3 L433.0 275.5 L435.5 275.4 L437.9 275.3 L440.3 275.0 L442.8 274.6 L445.2 274.0 L447.5 273.4Z" fill="#d85a2e" stroke="#d85a2e" stroke-width="0.6"/>
<path d="M479.8 296.3 L477.3 296.2 L474.9 296.1 L472.5 295.8 L470.0 295.4 L467.6 294.8 L465.3 294.2 L462.9 293.5 L460.6 292.6 L458.3 291.6 L411.5 270.8 L413.8 271.8 L416.1 272.7 L418.5 273.4 L420.8 274.0 L423.2 274.6 L425.7 275.0 L428.1 275.3 L430.5 275.4 L433.0 275.5Z" fill="#e36334" stroke="#e36334" stroke-width="0.6"/>
<path d="M433.0 152.5 L435.5 152.6 L437.9 152.7 L440.3 153.0 L442.8 153.4 L445.2 154.0 L447.5 154.6 L449.9 155.3 L452.2 156.2 L454.5 157.2 L456.8 158.3 L459.0 159.4 L461.1 160.7 L463.2 162.1 L465.2 163.6 L467.2 165.2 L469.1 166.9 L471.0 168.7 L472.7 170.5 L474.4 172.5 L476.1 174.5 L477.6 176.6 L479.0 178.7 L480.4 181.0 L481.7 183.2 L482.9 185.6 L483.9 188.0 L484.9 190.5 L485.8 193.0 L486.6 195.5 L487.3 198.1 L487.9 200.7 L488.3 203.3 L488.7 206.0 L489.0 208.6 L489.1 211.3 L489.2 214.0 L489.1 216.7 L489.0 219.4 L488.7 222.0 L488.3 224.7 L487.9 227.3 L487.3 229.9 L486.6 232.5 L485.8 235.0 L484.9 237.5 L483.9 240.0 L482.9 242.4 L481.7 244.8 L480.4 247.0 L479.0 249.3 L477.6 251.4 L476.1 253.5 L474.4 255.5 L472.7 257.5 L471.0 259.3 L469.1 261.1 L467.2 262.8 L465.2 264.4 L463.2 265.9 L461.1 267.3 L459.0 268.6 L456.8 269.7 L454.5 270.8 L452.2 271.8 L449.9 272.7 L447.5 273.4 L445.2 274.0 L442.8 274.6 L440.3 275.0 L437.9 275.3 L435.5 275.4 L433.0 275.5 L430.5 275.4 L428.1 275.3 L425.7 275.0 L423.2 274.6 L420.8 274.0 L418.5 273.4 L416.1 272.7 L413.8 271.8 L411.5 270.8 L409.2 269.7 L407.0 268.6 L404.9 267.3 L402.8 265.9 L400.8 264.4 L398.8 262.8 L396.9 261.1 L395.0 259.3 L393.3 257.5 L391.6 255.5 L389.9 253.5 L388.4 251.4 L387.0 249.3 L385.6 247.0 L384.3 244.8 L383.1 242.4 L382.1 240.0 L381.1 237.5 L380.2 235.0 L379.4 232.5 L378.7 229.9 L378.1 227.3 L377.7 224.7 L377.3 222.0 L377.0 219.4 L376.9 216.7 L376.8 214.0 L376.9 211.3 L377.0 208.6 L377.3 206.0 L377.7 203.3 L378.1 200.7 L378.7 198.1 L379.4 195.5 L380.2 193.0 L381.1 190.5 L382.1 188.0 L383.1 185.6 L384.3 183.2 L385.6 181.0 L387.0 178.7 L388.4 176.6 L389.9 174.5 L391.6 172.5 L393.3 170.5 L395.0 168.7 L396.9 166.9 L398.8 165.2 L400.8 163.6 L402.8 162.1 L404.9 160.7 L407.0 159.4 L409.2 158.3 L411.5 157.2 L413.8 156.2 L416.1 155.3 L418.5 154.6 L420.8 154.0 L423.2 153.4 L425.7 153.0 L428.1 152.7 L430.5 152.6 L433.0 152.5Z" fill="#a5aa9e" stroke="#1c0a02" stroke-width="1"/>
</g>
<path d="M448.5 128.6 L478.5 91.4 L608.4 217.7 L578.4 254.9Z M475.2 142.7 L479.2 142.9 L483.2 143.3 L487.1 143.8 L491.1 144.6 L495.0 145.5 L498.9 146.7 L502.7 148.0 L506.4 149.5 L510.1 151.2 L513.7 153.0 L517.3 155.0 L520.8 157.2 L524.1 159.6 L527.4 162.1 L530.6 164.8 L533.6 167.6 L536.6 170.5 L539.4 173.6 L542.1 176.8 L544.6 180.2 L547.1 183.7 L549.4 187.3 L551.5 190.9 L553.5 194.7 L555.3 198.6 L557.0 202.6 L558.5 206.6 L559.9 210.7 L561.1 214.9 L562.1 219.1 L562.9 223.4 L563.6 227.7 L564.1 232.1 L564.4 236.4 L564.6 240.8 L564.6 245.2 L564.4 249.5 L564.0 253.9 L563.5 258.2 L562.8 262.5 L561.9 266.8 L560.8 271.0 L559.6 275.2 L558.2 279.3 L556.7 283.4 L554.9 287.3 L553.1 291.2 L551.1 295.0 L548.9 298.7 L546.6 302.3 L544.1 305.7 L541.5 309.1 L538.8 312.3 L536.0 315.4 L533.0 318.4 L529.9 321.2 L526.7 323.8 L523.4 326.3 L520.0 328.7 L516.6 330.9 L513.0 332.9 L509.4 334.7 L505.7 336.4 L501.9 337.9 L498.1 339.2 L494.2 340.3 L490.3 341.3 L486.3 342.1 L482.3 342.6 L478.3 343.0 L474.3 343.2 L470.3 343.2 L466.3 343.0 L462.3 342.6 L458.4 342.0 L454.4 341.3 L450.5 340.3 L446.6 339.2 L442.8 337.9 L439.1 336.4 L435.4 334.7 L431.8 332.9 L428.2 330.8 L424.7 328.7 L421.4 326.3 L418.1 323.8 L414.9 321.1 L411.9 318.3 L408.9 315.4 L406.1 312.3 L403.4 309.0 L400.9 305.7 L398.4 302.2 L396.1 298.6 L394.0 294.9 L392.0 291.1 L390.2 287.3 L388.5 283.3 L387.0 279.3 L385.6 275.1 L384.4 271.0 L383.4 266.7 L382.6 262.5 L381.9 258.2 L381.4 253.8 L381.1 249.5 L380.9 245.1 L380.9 240.7 L381.1 236.4 L381.5 232.0 L382.0 227.7 L382.7 223.3 L383.6 219.1 L384.7 214.9 L385.9 210.7 L387.3 206.6 L388.8 202.5 L390.6 198.6 L392.4 194.7 L394.4 190.9 L396.6 187.2 L398.9 183.6 L401.4 180.2 L404.0 176.8 L406.7 173.6 L409.5 170.5 L412.5 167.5 L415.6 164.7 L418.8 162.1 L422.1 159.5 L425.5 157.2 L428.9 155.0 L432.5 153.0 L436.1 151.1 L439.8 149.5 L443.6 148.0 L447.4 146.7 L451.3 145.5 L455.2 144.6 L459.2 143.8 L463.2 143.3 L467.2 142.9 L471.2 142.7 L475.2 142.7Z M479.8 173.3 L477.3 173.4 L474.9 173.5 L472.5 173.8 L470.0 174.2 L467.6 174.8 L465.3 175.4 L462.9 176.1 L460.6 177.0 L458.3 178.0 L456.0 179.1 L453.8 180.2 L451.7 181.5 L449.6 182.9 L447.6 184.4 L445.6 186.0 L443.7 187.7 L441.8 189.5 L440.1 191.3 L438.4 193.3 L436.7 195.3 L435.2 197.4 L433.8 199.5 L432.4 201.8 L431.1 204.1 L429.9 206.4 L428.9 208.8 L427.9 211.3 L427.0 213.8 L426.2 216.3 L425.5 218.9 L424.9 221.5 L424.5 224.1 L424.1 226.8 L423.8 229.4 L423.7 232.1 L423.6 234.8 L423.7 237.5 L423.8 240.2 L424.1 242.8 L424.5 245.5 L424.9 248.1 L425.5 250.7 L426.2 253.3 L427.0 255.8 L427.9 258.3 L428.9 260.8 L429.9 263.2 L431.1 265.6 L432.4 267.8 L433.8 270.1 L435.2 272.2 L436.7 274.3 L438.4 276.3 L440.1 278.3 L441.8 280.1 L443.7 281.9 L445.6 283.6 L447.6 285.2 L449.6 286.7 L451.7 288.1 L453.8 289.4 L456.0 290.5 L458.3 291.6 L460.6 292.6 L462.9 293.5 L465.3 294.2 L467.6 294.8 L470.0 295.4 L472.5 295.8 L474.9 296.1 L477.3 296.2 L479.8 296.3 L482.3 296.2 L484.7 296.1 L487.1 295.8 L489.6 295.4 L492.0 294.8 L494.3 294.2 L496.7 293.5 L499.0 292.6 L501.3 291.6 L503.6 290.5 L505.8 289.4 L507.9 288.1 L510.0 286.7 L512.0 285.2 L514.0 283.6 L515.9 281.9 L517.8 280.1 L519.5 278.3 L521.2 276.3 L522.9 274.3 L524.4 272.2 L525.8 270.1 L527.2 267.8 L528.5 265.6 L529.7 263.2 L530.7 260.8 L531.7 258.3 L532.6 255.8 L533.4 253.3 L534.1 250.7 L534.7 248.1 L535.1 245.5 L535.5 242.8 L535.8 240.2 L535.9 237.5 L536.0 234.8 L535.9 232.1 L535.8 229.4 L535.5 226.8 L535.1 224.1 L534.7 221.5 L534.1 218.9 L533.4 216.3 L532.6 213.8 L531.7 211.3 L530.7 208.8 L529.7 206.4 L528.5 204.1 L527.2 201.8 L525.8 199.5 L524.4 197.4 L522.9 195.3 L521.2 193.3 L519.5 191.3 L517.8 189.5 L515.9 187.7 L514.0 186.0 L512.0 184.4 L510.0 182.9 L507.9 181.5 L505.8 180.2 L503.6 179.1 L501.3 178.0 L499.0 177.0 L496.7 176.1 L494.3 175.4 L492.0 174.8 L489.6 174.2 L487.1 173.8 L484.7 173.5 L482.3 173.4 L479.8 173.3Z" fill="#b9491f" fill-rule="nonzero" stroke="none"/>
<path d="M479.8 173.3 L482.3 173.4 L484.7 173.5 L487.1 173.8 L489.6 174.2 L492.0 174.8 L494.3 175.4 L496.7 176.1 L499.0 177.0 L501.3 178.0 L503.6 179.1 L505.8 180.2 L507.9 181.5 L510.0 182.9 L512.0 184.4 L514.0 186.0 L515.9 187.7 L517.8 189.5 L519.5 191.3 L521.2 193.3 L522.9 195.3 L524.4 197.4 L525.8 199.5 L527.2 201.8 L528.5 204.1 L529.7 206.4 L530.7 208.8 L531.7 211.3 L532.6 213.8 L533.4 216.3 L534.1 218.9 L534.7 221.5 L535.1 224.1 L535.5 226.8 L535.8 229.4 L535.9 232.1 L536.0 234.8 L535.9 237.5 L535.8 240.2 L535.5 242.8 L535.1 245.5 L534.7 248.1 L534.1 250.7 L533.4 253.3 L532.6 255.8 L531.7 258.3 L530.7 260.8 L529.7 263.2 L528.5 265.6 L527.2 267.8 L525.8 270.1 L524.4 272.2 L522.9 274.3 L521.2 276.3 L519.5 278.3 L517.8 280.1 L515.9 281.9 L514.0 283.6 L512.0 285.2 L510.0 286.7 L507.9 288.1 L505.8 289.4 L503.6 290.5 L501.3 291.6 L499.0 292.6 L496.7 293.5 L494.3 294.2 L492.0 294.8 L489.6 295.4 L487.1 295.8 L484.7 296.1 L482.3 296.2 L479.8 296.3 L477.3 296.2 L474.9 296.1 L472.5 295.8 L470.0 295.4 L467.6 294.8 L465.3 294.2 L462.9 293.5 L460.6 292.6 L458.3 291.6 L456.0 290.5 L453.8 289.4 L451.7 288.1 L449.6 286.7 L447.6 285.2 L445.6 283.6 L443.7 281.9 L441.8 280.1 L440.1 278.3 L438.4 276.3 L436.7 274.3 L435.2 272.2 L433.8 270.1 L432.4 267.8 L431.1 265.6 L429.9 263.2 L428.9 260.8 L427.9 258.3 L427.0 255.8 L426.2 253.3 L425.5 250.7 L424.9 248.1 L424.5 245.5 L424.1 242.8 L423.8 240.2 L423.7 237.5 L423.6 234.8 L423.7 232.1 L423.8 229.4 L424.1 226.8 L424.5 224.1 L424.9 221.5 L425.5 218.9 L426.2 216.3 L427.0 213.8 L427.9 211.3 L428.9 208.8 L429.9 206.4 L431.1 204.1 L432.4 201.8 L433.8 199.5 L435.2 197.4 L436.7 195.3 L438.4 193.3 L440.1 191.3 L441.8 189.5 L443.7 187.7 L445.6 186.0 L447.6 184.4 L449.6 182.9 L451.7 181.5 L453.8 180.2 L456.0 179.1 L458.3 178.0 L460.6 177.0 L462.9 176.1 L465.3 175.4 L467.6 174.8 L470.0 174.2 L472.5 173.8 L474.9 173.5 L477.3 173.4 L479.8 173.3Z" fill="none" stroke="#1c0a02" stroke-width="1"/>
<defs><clipPath id="cs"><path clip-rule="evenodd" d="M0 0H600V600H0Z M448.5 128.6 L478.5 91.4 L608.4 217.7 L578.4 254.9Z"/></clipPath><clipPath id="co"><path clip-rule="evenodd" d="M0 0H600V600H0Z M475.2 142.7 L479.2 142.9 L483.2 143.3 L487.1 143.8 L491.1 144.6 L495.0 145.5 L498.9 146.7 L502.7 148.0 L506.4 149.5 L510.1 151.2 L513.7 153.0 L517.3 155.0 L520.8 157.2 L524.1 159.6 L527.4 162.1 L530.6 164.8 L533.6 167.6 L536.6 170.5 L539.4 173.6 L542.1 176.8 L544.6 180.2 L547.1 183.7 L549.4 187.3 L551.5 190.9 L553.5 194.7 L555.3 198.6 L557.0 202.6 L558.5 206.6 L559.9 210.7 L561.1 214.9 L562.1 219.1 L562.9 223.4 L563.6 227.7 L564.1 232.1 L564.4 236.4 L564.6 240.8 L564.6 245.2 L564.4 249.5 L564.0 253.9 L563.5 258.2 L562.8 262.5 L561.9 266.8 L560.8 271.0 L559.6 275.2 L558.2 279.3 L556.7 283.4 L554.9 287.3 L553.1 291.2 L551.1 295.0 L548.9 298.7 L546.6 302.3 L544.1 305.7 L541.5 309.1 L538.8 312.3 L536.0 315.4 L533.0 318.4 L529.9 321.2 L526.7 323.8 L523.4 326.3 L520.0 328.7 L516.6 330.9 L513.0 332.9 L509.4 334.7 L505.7 336.4 L501.9 337.9 L498.1 339.2 L494.2 340.3 L490.3 341.3 L486.3 342.1 L482.3 342.6 L478.3 343.0 L474.3 343.2 L470.3 343.2 L466.3 343.0 L462.3 342.6 L458.4 342.0 L454.4 341.3 L450.5 340.3 L446.6 339.2 L442.8 337.9 L439.1 336.4 L435.4 334.7 L431.8 332.9 L428.2 330.8 L424.7 328.7 L421.4 326.3 L418.1 323.8 L414.9 321.1 L411.9 318.3 L408.9 315.4 L406.1 312.3 L403.4 309.0 L400.9 305.7 L398.4 302.2 L396.1 298.6 L394.0 294.9 L392.0 291.1 L390.2 287.3 L388.5 283.3 L387.0 279.3 L385.6 275.1 L384.4 271.0 L383.4 266.7 L382.6 262.5 L381.9 258.2 L381.4 253.8 L381.1 249.5 L380.9 245.1 L380.9 240.7 L381.1 236.4 L381.5 232.0 L382.0 227.7 L382.7 223.3 L383.6 219.1 L384.7 214.9 L385.9 210.7 L387.3 206.6 L388.8 202.5 L390.6 198.6 L392.4 194.7 L394.4 190.9 L396.6 187.2 L398.9 183.6 L401.4 180.2 L404.0 176.8 L406.7 173.6 L409.5 170.5 L412.5 167.5 L415.6 164.7 L418.8 162.1 L422.1 159.5 L425.5 157.2 L428.9 155.0 L432.5 153.0 L436.1 151.1 L439.8 149.5 L443.6 148.0 L447.4 146.7 L451.3 145.5 L455.2 144.6 L459.2 143.8 L463.2 143.3 L467.2 142.9 L471.2 142.7 L475.2 142.7Z"/></clipPath></defs>
<path d="M475.2 142.7 L479.2 142.9 L483.2 143.3 L487.1 143.8 L491.1 144.6 L495.0 145.5 L498.9 146.7 L502.7 148.0 L506.4 149.5 L510.1 151.2 L513.7 153.0 L517.3 155.0 L520.8 157.2 L524.1 159.6 L527.4 162.1 L530.6 164.8 L533.6 167.6 L536.6 170.5 L539.4 173.6 L542.1 176.8 L544.6 180.2 L547.1 183.7 L549.4 187.3 L551.5 190.9 L553.5 194.7 L555.3 198.6 L557.0 202.6 L558.5 206.6 L559.9 210.7 L561.1 214.9 L562.1 219.1 L562.9 223.4 L563.6 227.7 L564.1 232.1 L564.4 236.4 L564.6 240.8 L564.6 245.2 L564.4 249.5 L564.0 253.9 L563.5 258.2 L562.8 262.5 L561.9 266.8 L560.8 271.0 L559.6 275.2 L558.2 279.3 L556.7 283.4 L554.9 287.3 L553.1 291.2 L551.1 295.0 L548.9 298.7 L546.6 302.3 L544.1 305.7 L541.5 309.1 L538.8 312.3 L536.0 315.4 L533.0 318.4 L529.9 321.2 L526.7 323.8 L523.4 326.3 L520.0 328.7 L516.6 330.9 L513.0 332.9 L509.4 334.7 L505.7 336.4 L501.9 337.9 L498.1 339.2 L494.2 340.3 L490.3 341.3 L486.3 342.1 L482.3 342.6 L478.3 343.0 L474.3 343.2 L470.3 343.2 L466.3 343.0 L462.3 342.6 L458.4 342.0 L454.4 341.3 L450.5 340.3 L446.6 339.2 L442.8 337.9 L439.1 336.4 L435.4 334.7 L431.8 332.9 L428.2 330.8 L424.7 328.7 L421.4 326.3 L418.1 323.8 L414.9 321.1 L411.9 318.3 L408.9 315.4 L406.1 312.3 L403.4 309.0 L400.9 305.7 L398.4 302.2 L396.1 298.6 L394.0 294.9 L392.0 291.1 L390.2 287.3 L388.5 283.3 L387.0 279.3 L385.6 275.1 L384.4 271.0 L383.4 266.7 L382.6 262.5 L381.9 258.2 L381.4 253.8 L381.1 249.5 L380.9 245.1 L380.9 240.7 L381.1 236.4 L381.5 232.0 L382.0 227.7 L382.7 223.3 L383.6 219.1 L384.7 214.9 L385.9 210.7 L387.3 206.6 L388.8 202.5 L390.6 198.6 L392.4 194.7 L394.4 190.9 L396.6 187.2 L398.9 183.6 L401.4 180.2 L404.0 176.8 L406.7 173.6 L409.5 170.5 L412.5 167.5 L415.6 164.7 L418.8 162.1 L422.1 159.5 L425.5 157.2 L428.9 155.0 L432.5 153.0 L436.1 151.1 L439.8 149.5 L443.6 148.0 L447.4 146.7 L451.3 145.5 L455.2 144.6 L459.2 143.8 L463.2 143.3 L467.2 142.9 L471.2 142.7 L475.2 142.7Z" fill="none" stroke="#1c0a02" stroke-width="1" clip-path="url(#cs)"/>
<path d="M448.5 128.6 L478.5 91.4 L608.4 217.7 L578.4 254.9Z" fill="none" stroke="#1c0a02" stroke-width="1" clip-path="url(#co)"/>
<path d="M221.4 435.5 L221.9 426.0 L222.4 418.0 L175.6 397.2 L175.1 405.2 L174.6 414.7Z" fill="#a64016" stroke="#a64016" stroke-width="0.6"/>
<path d="M222.4 418.0 L223.6 409.0 L226.0 400.0 L179.2 379.2 L176.8 388.2 L175.6 397.2Z" fill="#9e3c12" stroke="#9e3c12" stroke-width="0.6"/>
<path d="M226.0 400.0 L228.9 391.7 L182.1 370.9 L179.2 379.2Z" fill="#96380e" stroke="#96380e" stroke-width="0.6"/>
<path d="M228.9 391.7 L233.6 384.5 L186.8 363.7 L182.1 370.9Z" fill="#8b3308" stroke="#8b3308" stroke-width="0.6"/>
<path d="M233.6 384.5 L239.7 378.5 L246.0 373.3 L199.2 352.5 L192.9 357.7 L186.8 363.7Z" fill="#b6481e" stroke="#b6481e" stroke-width="0.6"/>
<path d="M246.0 373.3 L252.9 368.9 L260.0 364.8 L213.2 344.0 L206.1 348.1 L199.2 352.5Z" fill="#c44f24" stroke="#c44f24" stroke-width="0.6"/>
<path d="M260.0 364.8 L267.9 361.0 L221.1 340.2 L213.2 344.0Z" fill="#cf5529" stroke="#cf5529" stroke-width="0.6"/>
<path d="M174.6 414.7 L175.1 405.2 L175.6 397.2 L176.8 388.2 L179.2 379.2 L182.1 370.9 L186.8 363.7 L192.9 357.7 L199.2 352.5 L206.1 348.1 L213.2 344.0 L221.1 340.2" fill="none" stroke="#1c0a02" stroke-width="1" stroke-linejoin="round" stroke-linecap="round"/>
<path d="M221.1 340.2 L267.9 361.0" fill="none" stroke="#1c0a02" stroke-width="1" stroke-linejoin="round" stroke-linecap="round"/>
<path d="M132.5 440.6 L179.3 461.4 L308.5 588.0 L261.7 567.2Z" fill="#ba491f" stroke="#1c0a02" stroke-width="1" stroke-linejoin="round" />
<path d="M132.5 440.6 L162.3 403.9 L209.1 424.7 L179.3 461.4Z" fill="#93380f" stroke="#1c0a02" stroke-width="1" stroke-linejoin="round" />
<path d="M179.3 461.4 L209.1 424.7 L221.4 435.5 L221.9 426.0 L222.4 418.0 L223.6 409.0 L226.0 400.0 L228.9 391.7 L233.6 384.5 L239.7 378.5 L246.0 373.3 L252.9 368.9 L260.0 364.8 L267.9 361.0 L282.4 404.8 L274.5 407.2 L268.0 411.0 L262.5 415.6 L257.8 420.8 L254.1 426.5 L251.4 433.0 L249.9 439.7 L249.8 446.0 L250.7 451.5 L252.5 456.8 L255.0 461.5 L258.2 467.3 L261.9 472.9 L266.8 479.0 L272.2 484.6 L338.8 550.5 L308.5 588.0Z" fill="#b9491f" stroke="#1c0a02" stroke-width="1" stroke-linejoin="round" />
<path d="M283.5 329.5 L315.4 293.4 L515.6 488.3 L484.9 525.5Z" fill="#b9491f" stroke="#1c0a02" stroke-width="1" stroke-linejoin="round" />
<defs><linearGradient id="psh" x1="0" x2="1" y1="0" y2="0"><stop offset="0" stop-color="#000" stop-opacity="0"/><stop offset="0.5" stop-color="#000" stop-opacity="0.07"/><stop offset="1" stop-color="#000" stop-opacity="0.25"/></linearGradient></defs>
<rect x="563" y="0" width="26" height="584" fill="url(#psh)"/>
</svg>
<div id="panel">
<div class="pbg"></div><div class="pedge"></div>
<div class="btn-fav"><span>Favorites...</span></div>
<div class="t9" style="left:965.3px;top:9.6px;font-size:8.9px">Default</div>
<div class="hsep" style="top:33px;"></div>
<div class="pill" style="top:38.5px;height:21px;"></div>
<div class="tri-down" style="left:613px;top:42px;"></div>
<div class="t11" style="left:658px;top:38.6px;">Preview and Positioning</div>
<div class="navbtn" style="left:605px;top:67px;width:19px;height:17px;"><span class="arr l" style="left:2.6px"></span><span class="arr l" style="left:8.4px"></span></div>
<div class="navbtn" style="left:623px;top:67px;width:20px;height:17px;"><span class="arr r" style="left:3.8px"></span><span class="arr r" style="left:9.6px"></span></div>
<div class="field ro" style="left:646px;top:67px;width:200px;height:17px;"><span class="t10" style="left:0px;top:2px;">rjaText 3D</span></div>
<div class="sbtn" style="left:854px;top:67px;width:17px;height:17px;"><span class="arr r s" style="left:5.6px;top:4.4px"></span></div>
<div class="t9" style="left:672.3px;top:91.6px;">to Current Story</div>
<div class="sbtn" style="left:747px;top:90.5px;width:12px;height:11.5px;"><span class="arr r s" style="left:3.4px;top:1.8px"></span></div>
<div class="field" style="left:651.5px;top:105px;width:106px;height:17.5px;"><span class="t11" style="left:2.5px;top:1px;">0.0</span></div>
<div class="t9" style="left:678.3px;top:127.5px;">to Project Zero</div>
<div class="sbtn" style="left:747px;top:126.5px;width:12px;height:11.5px;"><span class="arr r s" style="left:3.4px;top:1.8px"></span></div>
<div class="field" style="left:651.5px;top:140.5px;width:106px;height:18px;"><span class="t11" style="left:2.5px;top:1.5px;">3000.0</span></div>
<div class="vsep" style="left:766px;top:92px;height:155px;"></div>
<div class="t9" style="left:774px;top:127px;">Relative</div>
<div class="sbtn" style="left:836px;top:126.5px;width:12px;height:11.5px;"><span class="arr r s" style="left:3.4px;top:1.8px"></span></div>
<div class="field" style="left:774.5px;top:140.5px;width:72.5px;height:18px;"><span class="t11" style="left:2.5px;top:1.5px;">0.00°</span></div>
<div class="chk" style="left:775.5px;top:171.5px;"></div>
<div class="t11" style="left:773.4px;top:208px;">Home Story:</div>
<div class="popup" style="left:832px;top:226.5px;width:152px;height:18px;"><span class="t11" style="left:6px;top:1.5px;">Current (2. New FFL)</span><div class="pcap"><i class="u"></i><i class="d"></i></div></div>
<div class="hsep" style="top:257px;"></div>
<div class="pill dim" style="top:262px;height:13px;border-radius:11px 11px 0 0 / 11px 11px 0 0;"></div>
<div class="tri-right" style="left:614px;top:264px;"></div>
<div class="t11 grey" style="left:658px;top:262px;">Custom Settings</div>
<div class="hsep2" style="top:274.5px;"></div>
<div class="pill" style="top:280px;height:21.5px;"></div>
<div class="tri-down" style="left:613px;top:283.5px;"></div>
<div class="t11" style="left:658px;top:279.8px;font-size:10.3px;letter-spacing:0;-webkit-text-stroke:0.45px #000;">Parameters</div>
<div class="notch"></div>
<div class="list">
<div class="row b" style="top:2.0px"><span class="k">Text<i class="d">...................</i></span><span class="v">rja</span></div>
<div class="lsep" style="top:23.0px"></div>
<div class="row" style="top:34.0px"><span class="k">Font type</span><span class="v">Futura</span></div>
<div class="row" style="top:50.0px"><span class="k">....... style</span><span class="v">Plain</span></div>
<div class="lsep" style="top:70.5px"></div>
<div class="row b" style="top:81.6px"><span class="k">3D pen</span><span class="sw" style="background:#000"></span><span class="v2">21 (0.10 mm)</span></div>
<div class="row" style="top:97.6px"><span class="k">Material</span><span class="v">0 (GENERAL)</span></div>
<div class="lsep" style="top:118.3px"></div>
<div class="row b" style="top:129.0px"><span class="k">Text height</span><span class="v">1000.0</span></div>
<div class="row b" style="top:145.0px"><span class="k"><i class="d">.......</i> thickness</span><span class="v">300.0</span></div>
<div class="row" style="top:161.0px"><span class="k">....... X axis rotation</span><span class="v">90.00°</span></div>
<div class="row" style="top:177.0px"><span class="k">....... Y axis rotation</span><span class="v">0.00°</span></div>
<div class="hl" style="top:191.0px"></div><div class="edit" style="top:192.5px"></div>
<div class="row" style="top:193.0px"><span class="k">....... Z axis rotation</span><span class="v" style="left:246.0px">45.00°</span></div>
<div class="lsep" style="top:214.0px"></div>
<div class="row b" style="top:225.0px"><span class="k">Show txt in 2D view</span><span class="v">On</span></div>
<div class="row" style="top:241.0px"><span class="k">2D pen for text box</span><span class="sw" style="background:#808080"></span><span class="v2" style="font-weight:normal">1 (0.10 mm)</span></div>
<div class="row" style="top:257.0px"><span class="k">Show shadow in 3D</span><span class="v">On</span></div>
<div class="sbar"></div>
</div>
</div>
<svg id="icons" width="998" height="584" viewBox="0 0 998 584">
<g>
<path d="M631.5 44.5 L634.5 41.5 H643 V47.5 L640 50.5 H631.5Z M631.5 57.5 L635.5 53.5 H643.5 L639.5 57.5Z" fill="#f2f2f2" stroke="#f2f2f2" stroke-width="2.6" stroke-linejoin="round" opacity="0.9"/>
<path d="M648 43.5 V57.5" stroke="#f4f4f4" stroke-width="3.2" opacity="0.7"/>
<path d="M631.5 44.5 L634.5 41.5 H643 V47.5 L640 50.5 H631.5Z" fill="#6c6cc4" stroke="#000" stroke-width="1"/>
<path d="M632 44.5 L634.8 42 H642.5 L640 44.5Z" fill="#a4a4f4"/>
<path d="M640 44.5 L642.5 42 V47.3 L640 50Z" fill="#9090e8"/>
<path d="M631.5 44.5 H640 V50.5 M640 44.5 L643 41.5" fill="none" stroke="#000" stroke-width="1"/>
<path d="M631.5 57.5 L635.5 53.5 H643.5 L639.5 57.5Z" fill="#44448c" stroke="#222" stroke-width="0.8"/>
<path d="M648 43.5 V57.5" stroke="#000" stroke-width="1" stroke-dasharray="2 1.4"/>
<path d="M646 46 L648 43.3 L650 46Z M646 48.3 L648 50.6 L650 48.3Z M646 52.6 L648 50.4 L650 52.6Z M646 55 L648 57.7 L650 55Z" fill="#000"/>
<path d="M641 50.5 H646 M640 57.5 H646" stroke="#444" stroke-width="0.7" stroke-dasharray="1 1"/>
</g>
<g>
<path d="M615.3 99.3 L624 98.8 L628.6 102.9 V109.6 H620.5 L615.3 105.3Z" fill="#f6f6f6" stroke="#f6f6f6" stroke-width="3" stroke-linejoin="round" opacity="0.85"/>
<path d="M606.5 112.5 H624.5 L629 118 H611Z" fill="#fff" stroke="#fafafa" stroke-width="2.4" opacity="0.9"/>
<path d="M606.5 112.5 H624.5 L629 118 H611Z" fill="#fff" stroke="#222" stroke-width="0.8" stroke-dasharray="1.3 0.7"/>
<path d="M615.3 99.3 L624 98.8 L628.6 102.9 V109.6 H620.5 L615.3 105.3Z" fill="#fff" stroke="#000" stroke-width="1.3" stroke-linejoin="round"/>
<path d="M620.5 103.7 L628.6 102.9 V109.6 H620.5Z" fill="#8a8a8a" stroke="#000" stroke-width="1"/>
<path d="M615.3 99.3 L620.5 103.7 V109.6 L615.3 105.3Z" fill="#c4c4c4" stroke="#000" stroke-width="1"/>
<path d="M620.6 101.6 L622 100.4 L623.4 101.6" fill="none" stroke="#444" stroke-width="0.7"/>
<path d="M630 110 H646 M630 117.5 H646" stroke="#555" stroke-width="0.8" stroke-dasharray="2 1.5"/>
<path d="M637 112 V120.5" stroke="#555" stroke-width="1.6"/>
<path d="M637 120.5 V125" stroke="#666" stroke-width="1.2" stroke-dasharray="1 1"/>
<path d="M634.6 113 L637 109.6 L639.4 113Z" fill="#000"/>
<path d="M643.8 111 V117.4" stroke="#000" stroke-width="1.1"/>
<path d="M641.7 112.5 L643.8 109.5 L645.9 112.5Z M641.7 115.7 L643.8 118.6 L645.9 115.7Z" fill="#000"/>
</g>
<g>
<path d="M607 150.3 H627.5 L632.5 156 H612.5Z" fill="#f6f6f6" stroke="#f6f6f6" stroke-width="2.6" opacity="0.85"/>
<path d="M607 150.3 H627.5 L632.5 156 H612.5Z" fill="#7e7e7e" stroke="#111" stroke-width="0.9" stroke-dasharray="1.6 0.5"/>
<path d="M633 156 H639" stroke="#666" stroke-width="0.9" stroke-dasharray="1 1"/>
<path d="M640.4 138.5 V142" stroke="#000" stroke-width="0.8" stroke-dasharray="1 0.8"/>
<path d="M640.4 142 V154" stroke="#000" stroke-width="1"/>
<path d="M638 153.2 L640.4 156.8 L642.8 153.2Z" fill="#000"/>
</g>
<g>
<rect x="-4.3" y="-4.3" width="8.6" height="8.6" transform="translate(786.9 107.2) rotate(-27)" fill="#fff" stroke="#000" stroke-width="1.7"/>
<path d="M-2 -2 L2 2 M2 -2 L-2 2" transform="translate(786.9 107.2) rotate(-27)" stroke="#333" stroke-width="0.8"/>
<path d="M776 118.5 H796" stroke="#000" stroke-width="0.9" stroke-dasharray="1 0.7"/>
<path d="M773.6 113 L776.2 118 L782.5 115" fill="none" stroke="#000" stroke-width="0.9"/>
<path d="M772.8 110.8 L775.6 113.6 L773 115Z" fill="#000"/>
<path d="M779.5 116.2 L783 114.2 L782.6 116Z" fill="#000"/>
<text x="787.3" y="118" font-family="'DejaVu Sans','Liberation Sans',sans-serif" font-size="9.5" font-weight="bold" fill="#000">α</text>
</g>
<g>
<rect x="791.4" y="173.2" width="8.4" height="8.4" fill="#fff" stroke="#000" stroke-width="1.9"/>
<path d="M793 174.8 L798.2 180 M798.2 174.8 L793 180" stroke="#222" stroke-width="0.8"/>
<path d="M803.5 169 V185" stroke="#000" stroke-width="0.9" stroke-dasharray="1.6 1"/>
<rect x="807" y="172.9" width="9" height="9" fill="#f6f6f6" stroke="#444" stroke-width="1.3" stroke-dasharray="1.2 0.9"/>
<path d="M809.6 175.6 L813.4 179.2 M813.4 175.6 L809.6 179.2" stroke="#555" stroke-width="0.8" stroke-dasharray="1 0.7"/>
</g>
<g>
<defs><linearGradient id="bg1" x1="0" y1="0" x2="0" y2="1"><stop offset="0" stop-color="#ffffff"/><stop offset="0.5" stop-color="#f1f1f1"/><stop offset="1" stop-color="#e9e9e9"/></linearGradient><linearGradient id="bg2" x1="0" y1="0" x2="0" y2="1"><stop offset="0" stop-color="#9c9c9c"/><stop offset="0.45" stop-color="#bcbcbc"/><stop offset="1" stop-color="#d6d6d6"/></linearGradient></defs>
<rect x="853.5" y="92.5" width="18" height="17.6" fill="url(#bg1)" stroke="#a2a2a2" stroke-width="1"/>
<rect x="853.5" y="110.1" width="18" height="17.6" fill="url(#bg2)" stroke="#a2a2a2" stroke-width="1"/>
<rect x="853.5" y="127.7" width="18" height="17.6" fill="url(#bg1)" stroke="#a2a2a2" stroke-width="1"/>
<rect x="853.5" y="145.3" width="18" height="17.6" fill="url(#bg1)" stroke="#a2a2a2" stroke-width="1"/>
<rect x="853.5" y="162.9" width="18" height="17.6" fill="url(#bg1)" stroke="#a2a2a2" stroke-width="1"/>
<rect x="853.5" y="180.5" width="18" height="17.6" fill="url(#bg1)" stroke="#a2a2a2" stroke-width="1"/>
<rect x="859.3" y="98" width="6.6" height="6.4" fill="#fff" stroke="#000" stroke-width="1.1"/>
<rect x="859.3" y="115.2" width="6.6" height="5.6" fill="#fff" stroke="#000" stroke-width="1.1"/>
<path d="M857 122.2 H868.2" stroke="#000" stroke-width="1"/>
<path d="M858.6 122.5 L857.2 124.3 M861.2 122.5 L859.8 124.3 M863.8 122.5 L862.4 124.3 M866.4 122.5 L865 124.3" stroke="#000" stroke-width="0.8"/>
<path d="M862.6 132.2 L866.4 134.3 V139 L862.6 141.2 L858.8 139 V134.3Z M858.8 134.3 L862.6 136.4 L866.4 134.3 M862.6 136.4 V141.2" fill="#fff" stroke="#000" stroke-width="0.9" stroke-linejoin="round"/>
<path d="M862.6 149.6 L866.6 151.8 V156.6 L862.6 158.9 L858.6 156.6 V151.8Z" fill="#000" stroke="#000" stroke-width="0.9" stroke-linejoin="round"/>
<path d="M859.4 152 L862.6 150.3 L865.8 152 L862.6 153.8Z" fill="#fff"/>
<path d="M859.2 152.8 L862.2 154.5 V158 L859.2 156.3Z" fill="#9a9a9a"/>
<path d="M857.8 167.2 V176.4 M867.6 167.2 V176.4" stroke="#000" stroke-width="1.8" stroke-dasharray="1.2 0.8"/>
<rect x="859.2" y="168.6" width="7" height="6.4" fill="#fff" stroke="#000" stroke-width="1.2"/>
<rect x="861.2" y="170.6" width="3" height="2.4" fill="#999"/>
<path d="M858.4 185.3 H867.2" stroke="#555" stroke-width="1.3"/>
<path d="M858.4 187.6 H867.2" stroke="#888" stroke-width="1"/>
<path d="M858.4 190 H862.6 M858.4 192.2 H862.6 M858.4 194.4 H862.6" stroke="#555" stroke-width="1.1"/>
<path d="M864 189.6 H867.4 L865.7 192 L867.4 194.6 H864 L865.7 192Z" fill="#000"/>
</g>
<rect x="874.5" y="93" width="108.5" height="108.5" fill="#fff" stroke="#5a5a5a" stroke-width="1"/>
<g>
<path d="M901.0 126.3 L900.9 125.7 L900.9 125.2 L900.7 124.6 L900.6 124.1 L900.4 123.6 L900.1 123.1 L899.8 122.6 L899.4 122.1 L899.1 121.7 L898.7 121.4 L898.2 121.0 L897.7 120.7 L897.2 120.4 L896.7 120.2 L896.2 120.1 L895.6 119.9 L895.1 119.9 L894.5 119.8 L893.9 119.9 L893.4 119.9 L892.8 120.1 L892.3 120.2 L891.8 120.4 L891.3 120.7 L890.8 121.0 L890.3 121.4 L889.9 121.7 L889.6 122.1 L889.2 122.6 L888.9 123.1 L888.6 123.6 L888.4 124.1 L888.3 124.6 L888.1 125.2 L888.1 125.7 L888.0 126.3 L888.1 126.9 L888.1 127.4 L888.3 128.0 L888.4 128.5 L888.6 129.0 L888.9 129.5 L889.2 130.0 L889.6 130.5 L889.9 130.9 L890.3 131.2 L890.8 131.6 L891.3 131.9 L891.8 132.2 L892.3 132.4 L892.8 132.5 L893.4 132.7 L893.9 132.7 L894.5 132.8 L895.1 132.7 L895.6 132.7 L896.2 132.5 L896.7 132.4 L897.2 132.2 L897.7 131.9 L898.2 131.6 L898.7 131.2 L899.1 130.9 L899.4 130.5 L899.8 130.0 L900.1 129.5 L900.4 129.0 L900.6 128.5 L900.7 128.0 L900.9 127.4 L900.9 126.9 L901.0 126.3Z" fill="none" stroke="#000" stroke-width="1" stroke-linejoin="round" shape-rendering="crispEdges"/>
<path d="M903.1 142.3 L910.6 135.5 L957.8 182.7 L950.6 189.8Z" fill="none" stroke="#000" stroke-width="1" stroke-linejoin="round" shape-rendering="crispEdges"/>
<path d="M878.6 167.6 L885.6 160.5 L888.5 163.2 L888.6 161.2 L888.7 159.5 L889.0 157.6 L889.6 155.7 L890.3 154.0 L891.4 152.6 L892.8 151.5 L894.3 150.6 L895.9 149.8 L897.6 149.2 L899.4 148.6 L902.9 158.3 L901.0 158.6 L899.5 159.3 L898.2 160.1 L897.1 161.1 L896.2 162.2 L895.6 163.5 L895.2 164.9 L895.2 166.2 L895.4 167.4 L895.8 168.6 L896.4 169.7 L897.2 171.0 L898.0 172.3 L899.2 173.8 L900.5 175.1 L916.2 191.1 L909.0 198.2Z" fill="none" stroke="#000" stroke-width="1" stroke-linejoin="round" shape-rendering="crispEdges"/>
<path d="M969.4 132.1 L969.3 133.1 L969.2 134.0 L969.1 134.9 L968.9 135.8 L968.7 136.7 L968.5 137.6 L968.2 138.4 L967.9 139.2 L967.5 140.1 L967.1 140.9 L966.7 141.6 L966.2 142.4 L965.7 143.1 L965.1 143.8 L964.6 144.5 L963.9 145.1 L963.3 145.8 L962.6 146.3 L961.9 146.9 L961.2 147.4 L960.5 147.9 L959.7 148.3 L958.9 148.7 L958.1 149.1 L957.2 149.4 L956.4 149.7 L955.5 150.0 L954.6 150.2 L953.7 150.4 L952.8 150.5 L951.9 150.6 L950.9 150.6 L950.0 150.7 L949.1 150.6 L948.1 150.6 L947.2 150.4 L946.2 150.3 L945.3 150.1 L944.3 149.9 L943.4 149.6 L942.5 149.3 L941.6 148.9 L940.7 148.5 L939.8 148.1 L938.9 147.6 L938.1 147.2 L937.2 146.6 L936.4 146.1 L935.6 145.5 L934.9 144.8 L934.1 144.2 L933.4 143.5 L932.7 142.8 L932.0 142.0 L931.4 141.3 L930.8 140.5 L930.2 139.7 L929.7 138.8 L929.2 138.0 L928.7 137.1 L928.3 136.2 L927.9 135.3 L927.5 134.4 L927.2 133.5 L926.9 132.6 L926.7 131.7 L926.5 130.7 L926.3 129.8 L926.2 128.9 L926.1 127.9 L926.1 127.0 L926.1 126.0 L926.1 125.1 L926.2 124.2 L926.3 123.3 L926.5 122.4 L926.7 121.5 L927.0 120.6 L927.3 119.8 L927.6 118.9 L928.0 118.1 L928.4 117.3 L928.8 116.5 L929.3 115.8 L929.8 115.0 L930.3 114.3 L930.9 113.7 L931.5 113.0 L932.2 112.4 L932.8 111.8 L933.5 111.3 L934.3 110.8 L935.0 110.3 L935.8 109.8 L936.6 109.4 L937.4 109.1 L938.2 108.7 L939.1 108.4 L940.0 108.2 L940.9 108.0 L941.8 107.8 L942.7 107.7 L943.6 107.6 L944.5 107.5 L945.5 107.5 L942.0 104.0 L949.1 96.9 L979.7 127.5 L972.6 134.6Z" fill="none" stroke="#000" stroke-width="1" stroke-linejoin="round" shape-rendering="crispEdges"/>
<path d="M949.4 114.4 L950.0 114.5 L950.5 114.6 L951.1 114.7 L951.7 114.9 L952.3 115.1 L952.8 115.3 L953.4 115.5 L953.9 115.7 L954.5 116.0 L955.0 116.3 L955.5 116.6 L956.0 116.9 L956.5 117.3 L957.0 117.7 L957.5 118.1 L957.9 118.5 L958.3 118.9 L958.8 119.4 L959.2 119.8 L959.5 120.3 L959.9 120.8 L960.2 121.3 L960.6 121.8 L960.9 122.3 L961.1 122.9 L961.4 123.4 L961.6 124.0 L961.8 124.5 L962.0 125.1 L962.2 125.7 L962.3 126.2 L962.4 126.8 L962.5 127.4 L962.6 128.0 L962.6 128.5 L962.6 129.1 L962.6 129.7 L962.6 130.3 L962.5 130.8 L962.4 131.4 L962.3 131.9 L962.2 132.5 L962.0 133.0 L961.8 133.5 L961.6 134.0 L961.4 134.5 L961.1 135.0 L960.9 135.5 L960.6 135.9 L960.2 136.4 L959.9 136.8 L959.5 137.2 L959.2 137.6 L958.8 137.9 L958.3 138.3 L957.9 138.6 L957.5 138.9 L957.0 139.2 L956.5 139.5 L956.0 139.7 L955.5 139.9 L955.0 140.1 L954.5 140.3 L953.9 140.4 L953.4 140.5 L952.8 140.6 L952.3 140.7 L951.7 140.8 L951.1 140.8 L950.5 140.8 L950.0 140.7 L949.4 140.7 L948.8 140.6 L948.2 140.5 L947.7 140.4 L947.1 140.2 L946.5 140.0 L946.0 139.8 L945.4 139.6 L944.9 139.4 L944.3 139.1 L943.8 138.8 L943.3 138.5 L942.8 138.1 L942.3 137.8 L941.8 137.4 L941.3 137.0 L940.9 136.6 L940.4 136.2 L940.0 135.7 L939.6 135.3 L939.2 134.8 L938.9 134.3 L938.5 133.8 L938.2 133.3 L937.9 132.8 L937.6 132.2 L937.4 131.7 L937.2 131.1 L936.9 130.6 L936.8 130.0 L936.6 129.4 L936.5 128.9 L936.3 128.3 L936.3 127.7 L936.2 127.1 L936.2 126.5 L936.1 126.0 L936.2 125.4 L936.2 124.8 L936.3 124.3 L936.3 123.7 L936.5 123.2 L936.6 122.6 L936.8 122.1 L936.9 121.6 L937.2 121.1 L937.4 120.6 L937.6 120.1 L937.9 119.6 L938.2 119.2 L938.5 118.7 L938.9 118.3 L939.2 117.9 L939.6 117.5 L940.0 117.1 L940.4 116.8 L940.9 116.5 L941.3 116.2 L941.8 115.9 L942.3 115.6 L942.8 115.4 L943.3 115.2 L943.8 115.0 L944.3 114.8 L944.9 114.7 L945.4 114.5 L946.0 114.4 L946.5 114.4 L947.1 114.3 L947.7 114.3 L948.2 114.3 L948.8 114.3 L949.4 114.4Z" fill="none" stroke="#000" stroke-width="1" stroke-linejoin="round" shape-rendering="crispEdges"/>
</g>
<g>
<rect x="631.6" y="283" width="13" height="5" fill="#f4f4f4"/><rect x="644" y="287.5" width="5" height="12" fill="#f4f4f4"/>
<rect x="632.8" y="288" width="11.2" height="10.9" fill="#a9a9f6" stroke="#222" stroke-width="1.1"/>
<path d="M632.6 284.2 H644.2 M632.8 283 V285.5 M644 283 V285.5" stroke="#000" stroke-width="1"/>
<path d="M647.6 288.4 V298.6 M646.4 288.6 H648.8 M646.4 298.4 H648.8" stroke="#000" stroke-width="1"/>
</g>
<g opacity="0.75">
<rect x="632.3" y="264.6" width="3" height="3" fill="#a6a6e6" stroke="#888" stroke-width="0.7"/>
<path d="M637 264.6 V267.6 M639.2 264.6 V267.6" stroke="#999" stroke-width="0.8"/>
<path d="M632.5 269.4 H635.6 V271.8 M632.5 269.4 V271.8" stroke="#999" stroke-width="0.8" fill="none"/>
<rect x="642.6" y="265" width="5.6" height="1.8" fill="#f2f2f2"/><rect x="642.6" y="269" width="5.6" height="1.8" fill="#f2f2f2"/>
</g>
<path d="M588.8 4.8 L592.3 5 L589.2 8.7 L588.8 8.5Z" fill="#2e2e2e"/>
</svg>
</body></html>
